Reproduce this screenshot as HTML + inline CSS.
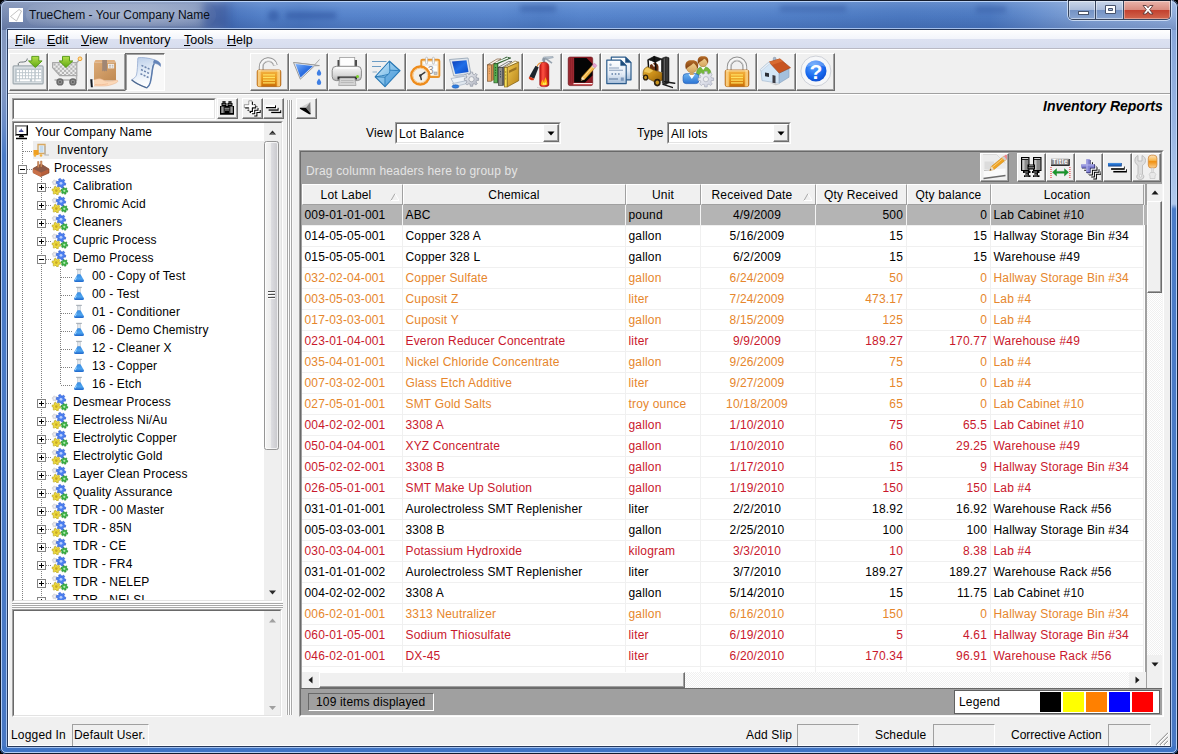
<!DOCTYPE html>
<html><head><meta charset="utf-8"><title>TrueChem</title>
<style>
*{box-sizing:border-box;margin:0;padding:0}
html,body{width:1178px;height:754px;overflow:hidden}
body{font-family:"Liberation Sans",sans-serif;font-size:12px;color:#000;background:#000;position:relative;line-height:1;letter-spacing:.17px}
.a{position:absolute}
.t{position:absolute;white-space:nowrap;line-height:14px;height:14px}
#frame{position:absolute;left:0;top:0;width:1178px;height:754px;border-radius:7px 7px 6px 6px;overflow:hidden;background:#4878c4}

#client{position:absolute;left:0;top:0;width:1178px;height:754px}
#cbg{position:absolute;left:8px;top:30px;width:1162px;height:716px;background:#f0f0f0}
#menubar{position:absolute;left:8px;top:30px;width:1162px;height:19px;background:linear-gradient(#fff 0,#f3f5fb 45%,#dce1f1 50%,#d6dcee 100%)}
.mi{position:absolute;top:33px;font-size:12.5px;letter-spacing:0;line-height:14px;white-space:nowrap}
.mi u{text-decoration:underline;text-underline-offset:1px}
.tb{position:absolute;top:53px;width:38px;height:38px;background:#f0f0f0;border-top:1px solid #fff;border-left:1px solid #fff;border-right:1px solid #6d6d6d;border-bottom:1px solid #6d6d6d}
.tb:after{content:"";position:absolute;left:0;top:0;right:0;bottom:0;border-right:1px solid #a0a0a0;border-bottom:1px solid #a0a0a0}
.tb.down{background:#f8f8f8;border-top:1px solid #6d6d6d;border-left:1px solid #6d6d6d;border-right:1px solid #fff;border-bottom:1px solid #fff}
.tb.down:after{border:none;border-top:1px solid #a0a0a0;border-left:1px solid #a0a0a0}
.tb svg{position:absolute;left:2px;top:2px}
.sb{position:absolute;background:#f0f0f0;border-top:1px solid #fff;border-left:1px solid #fff;border-right:1px solid #6d6d6d;border-bottom:1px solid #6d6d6d}
.sb:after{content:"";position:absolute;left:0;top:0;right:0;bottom:0;border-right:1px solid #a0a0a0;border-bottom:1px solid #a0a0a0}
.sunk{position:absolute;background:#fff;border-top:1px solid #a0a0a0;border-left:1px solid #a0a0a0;border-right:1px solid #fff;border-bottom:1px solid #fff}
.sunk:after{content:"";position:absolute;left:0;top:0;right:0;bottom:0;border-top:1px solid #696969;border-left:1px solid #696969;border-right:1px solid #e3e3e3;border-bottom:1px solid #e3e3e3}
.ti{position:absolute;white-space:nowrap;font-size:12px;line-height:18px;height:18px}
.dv{position:absolute;width:1px;background-image:linear-gradient(#808080 50%,transparent 50%);background-size:1px 2px}
.dh{position:absolute;height:1px;background-image:linear-gradient(90deg,#808080 50%,transparent 50%);background-size:2px 1px}
.ex{position:absolute;width:9px;height:9px;border:1px solid #848484;background:#fff}
.ex:before{content:"";position:absolute;left:1px;top:3px;width:5px;height:1px;background:#000}
.ex.p:after{content:"";position:absolute;left:3px;top:1px;width:1px;height:5px;background:#000}
.hc{position:absolute;top:184px;height:21px;background:#f0f0f0;border-left:1px solid #fff;border-top:1px solid #fff;border-right:1px solid #a0a0a0;border-bottom:1px solid #a0a0a0;text-align:center;font-size:12px;line-height:20px;white-space:nowrap}
.row{position:absolute;left:302px;width:842px;height:21px;background:#fff;border-bottom:1px solid #f0f0f0}
.row.sel{background:#b4b4b4}
.c{position:absolute;top:0;height:20px;line-height:21px;font-size:12px;white-space:nowrap;overflow:hidden;border-right:1px solid #f0f0f0}
.row.sel .c{border-right-color:#f4f4f4}
.o{color:#e6862c}.r{color:#c9182c}
.dith{background-color:#fff;background-image:linear-gradient(45deg,#f0f0f0 25%,transparent 25%,transparent 75%,#f0f0f0 75%),linear-gradient(45deg,#f0f0f0 25%,transparent 25%,transparent 75%,#f0f0f0 75%);background-size:2px 2px;background-position:0 0,1px 1px}

</style></head><body>
<div id="frame">
 <!-- title glass -->
 <div class="a" style="left:0;top:0;width:1178px;height:30px;background:linear-gradient(90deg,#7a8db4 0,#8094ba 60px,#8497bd 150px,#7c91ba 200px,#6d8dc6 218px,#4b76bf 232px,#5583cb 262px,#4f7dc6 300px,#5886ce 345px,#5988d0 500px,#5382ca 540px,#5988d0 580px,#5584cc 760px,#4d7bc3 900px,#4e7cc4 990px,#6a92d0 1040px,#86a6d8 1090px,#93b0de 1178px)"></div>
 <div class="a" style="left:0;top:0;width:1178px;height:30px;background:linear-gradient(rgba(255,255,255,.16) 0,rgba(255,255,255,.04) 30%,rgba(20,40,100,.04) 55%,rgba(10,30,90,.20) 100%)"></div>
 <div class="a" style="left:26px;top:4px;width:190px;height:22px;border-radius:11px;background:radial-gradient(ellipse at center,rgba(255,255,255,.30) 0,rgba(255,255,255,.16) 55%,rgba(255,255,255,0) 100%)"></div>
 <div class="a" style="left:203px;top:2px;width:26px;height:27px;background:rgba(40,70,140,.55);filter:blur(4px)"></div>
 <div class="a" style="left:268px;top:10px;width:11px;height:11px;border-radius:6px;background:rgba(40,75,150,.45);filter:blur(2px)"></div>
 <div class="a" style="left:286px;top:12px;width:50px;height:7px;background:rgba(40,75,150,.45);filter:blur(2.500px)"></div>
 <div class="a" style="left:520px;top:5px;width:36px;height:7px;background:rgba(40,75,150,.40);filter:blur(2.500px)"></div>
 <div class="a" style="left:780px;top:5px;width:66px;height:7px;background:rgba(40,75,150,.35);filter:blur(2.500px)"></div>
 <div class="a" style="left:976px;top:6px;width:30px;height:7px;background:rgba(40,75,150,.35);filter:blur(2.500px)"></div>
 <!-- left strip -->
 <div class="a" style="left:0;top:30px;width:8px;height:724px;background:linear-gradient(#8397be 0,#8298c2 60px,#6a8cc8 95px,#4b7cc8 125px,#4878c4 100%)"></div>
 <!-- right strip -->
 <div class="a" style="left:1170px;top:30px;width:8px;height:724px;background:linear-gradient(#88a6da 0,#98b4e2 90px,#b0c8ec 170px,#b0c8ec 174px,#4b7cc8 179px,#4878c4 100%)"></div>
 <!-- bottom strip -->
 <div class="a" style="left:0;top:746px;width:1178px;height:8px;background:#3f74c4"></div>
 <!-- outer lines -->
 <div class="a" style="left:0;top:0;width:1178px;height:754px;border:1px solid #141c2c;border-radius:7px 7px 6px 6px"></div>
 <div class="a" style="left:1px;top:1px;width:1176px;height:752px;border:1px solid rgba(200,222,255,.85);border-radius:6px 6px 5px 5px"></div>
</div>
<div class="a" style="left:6px;top:28px;width:1166px;height:720px;border:1px solid rgba(190,214,250,.8);border-radius:2px"></div>
<div class="a" style="left:7px;top:29px;width:1164px;height:718px;border:1px solid #26385a"></div>
<div id="cbg"></div>
<div class="a" style="left:8px;top:30px;width:1px;height:716px;background:#fff"></div>
<div class="a" style="left:8px;top:745px;width:1162px;height:1px;background:#fff"></div>
<div class="a" style="left:9px;top:8px;width:14px;height:14px;background:#fff"><svg width="14" height="14" viewBox="0 0 14 14"><path d="M1.500 8.500L10 1.500L12.500 3L7.500 13Z" fill="none" stroke="#b4b4b4" stroke-width="0.8"/></svg></div>
<div class="t" style="left:29px;top:8px;font-size:12px;letter-spacing:0;color:#0a0f18" id="title">TrueChem - Your Company Name</div>
<!-- caption buttons -->
<div class="a" style="left:1067px;top:0;width:105px;height:21px;border-radius:0 0 6px 6px;border:1px solid rgba(225,236,252,.75);border-top:none"></div>
<div class="a" style="left:1068px;top:1px;width:103px;height:19px;border:1px solid #37455e;border-top:none;border-radius:0 0 5px 5px;overflow:hidden">
 <div class="a" style="left:0;top:0;width:27px;height:18px;background:linear-gradient(#c9d6e9 0,#aabcda 48%,#7593c4 52%,#89a5d1 100%);border-right:1px solid #37455e;box-shadow:inset 0 0 0 1px rgba(255,255,255,.45)"></div>
 <div class="a" style="left:27px;top:0;width:28px;height:18px;background:linear-gradient(#c9d6e9 0,#aabcda 48%,#7593c4 52%,#89a5d1 100%);border-right:1px solid #37455e;box-shadow:inset 0 0 0 1px rgba(255,255,255,.45)"></div>
 <div class="a" style="left:55px;top:0;width:46px;height:18px;background:linear-gradient(#e9b4ab 0,#d98c80 48%,#c3412f 52%,#d2674f 100%);box-shadow:inset 0 0 0 1px rgba(255,255,255,.35)"></div>
 <svg class="a" style="left:0;top:0" width="101" height="18" viewBox="0 0 101 18">
  <rect x="9.500" y="10.500" width="10" height="3" fill="#fff" stroke="#48546c" stroke-width="1"/>
  <path d="M36.500 4.500h10v8h-10z M39.500 7.500h4v2h-4z" fill="#fff" fill-rule="evenodd" stroke="#48546c" stroke-width="1"/>
  <path d="M74 4.500h3.200l1.800 2.300 1.800-2.300H84l-3.300 4.200L84 13h-3.200L79 10.600 77.200 13H74l3.300-4.300z" fill="#fff" stroke="#5a3838" stroke-width="0.9"/>
 </svg>
</div>
<div id="client">
<div id="menubar"></div>
<div class="a" style="left:8px;top:48px;width:1162px;height:1px;background:#b9b9c4"></div>
<div class="a" style="left:8px;top:49px;width:1162px;height:1px;background:#fff"></div>
<div class="mi" style="left:15px"><u>F</u>ile</div>
<div class="mi" style="left:47px"><u>E</u>dit</div>
<div class="mi" style="left:81px"><u>V</u>iew</div>
<div class="mi" style="left:119px">Inventory</div>
<div class="mi" style="left:184px"><u>T</u>ools</div>
<div class="mi" style="left:227px"><u>H</u>elp</div>
<svg width="0" height="0" style="position:absolute"><defs>
<linearGradient id="gGreen" x1="0" y1="0" x2="0" y2="1"><stop offset="0" stop-color="#b4e04a"/><stop offset="1" stop-color="#5fa812"/></linearGradient>
<linearGradient id="gLock" x1="0" y1="0" x2="0" y2="1"><stop offset="0" stop-color="#f4b448"/><stop offset=".5" stop-color="#e89818"/><stop offset="1" stop-color="#c86c08"/></linearGradient>
<linearGradient id="gLockH" x1="0" y1="0" x2="1" y2="0"><stop offset="0" stop-color="#c9791a"/><stop offset=".06" stop-color="#fbd48a"/><stop offset=".16" stop-color="#f8c060" stop-opacity=".9"/><stop offset=".2" stop-color="#e89820" stop-opacity="0"/><stop offset=".8" stop-color="#e89820" stop-opacity="0"/><stop offset=".84" stop-color="#f8c060" stop-opacity=".9"/><stop offset=".94" stop-color="#fbd48a"/><stop offset="1" stop-color="#b7650e"/></linearGradient>
<linearGradient id="gSteel" x1="0" y1="0" x2="1" y2="0"><stop offset="0" stop-color="#9a9a9a"/><stop offset=".5" stop-color="#f4f4f4"/><stop offset="1" stop-color="#a8a8a8"/></linearGradient>
<linearGradient id="gBlue" x1="0" y1="0" x2="1" y2="1"><stop offset="0" stop-color="#7db0f8"/><stop offset=".5" stop-color="#2f72e4"/><stop offset="1" stop-color="#1c50c0"/></linearGradient>
<linearGradient id="gPrn" x1="0" y1="0" x2="0" y2="1"><stop offset="0" stop-color="#fbfbfb"/><stop offset=".6" stop-color="#d9d9d9"/><stop offset="1" stop-color="#b4b4b4"/></linearGradient>
<linearGradient id="gEnv" x1="0" y1="0" x2="1" y2="1"><stop offset="0" stop-color="#d9eefb"/><stop offset="1" stop-color="#7cbde8"/></linearGradient>
<linearGradient id="gScreen" x1="0" y1="0" x2="1" y2="1"><stop offset="0" stop-color="#0b3fb8"/><stop offset=".5" stop-color="#1f6fe8"/><stop offset="1" stop-color="#0c48c4"/></linearGradient>
<linearGradient id="gDoc" x1="0" y1="0" x2="0" y2="1"><stop offset="0" stop-color="#ffffff"/><stop offset=".6" stop-color="#e4ecf6"/><stop offset="1" stop-color="#a4bcd8"/></linearGradient>
<linearGradient id="gRed" x1="0" y1="0" x2="1" y2="0"><stop offset="0" stop-color="#c01010"/><stop offset=".35" stop-color="#ff5040"/><stop offset="1" stop-color="#b00c0c"/></linearGradient>
<radialGradient id="gHelp" cx=".4" cy=".3" r=".8"><stop offset="0" stop-color="#5aa2ff"/><stop offset=".6" stop-color="#1768ee"/><stop offset="1" stop-color="#0a46c8"/></radialGradient>
<linearGradient id="gBox" x1="0" y1="0" x2="1" y2="1"><stop offset="0" stop-color="#dcaa76"/><stop offset="1" stop-color="#c08a52"/></linearGradient>
<linearGradient id="gPaper" x1="0" y1="0" x2="1" y2="0"><stop offset="0" stop-color="#f4f8fd"/><stop offset=".7" stop-color="#dfe9f6"/><stop offset="1" stop-color="#9ab4d8"/></linearGradient>
<linearGradient id="gGear" x1="0" y1="0" x2="1" y2="1"><stop offset="0" stop-color="#f4f5f8"/><stop offset="1" stop-color="#a9aebb"/></linearGradient>
<linearGradient id="gYel" x1="0" y1="0" x2="1" y2="1"><stop offset="0" stop-color="#f0c850"/><stop offset="1" stop-color="#b88418"/></linearGradient>
</defs></svg>
<div class="a" style="left:8px;top:93px;width:1162px;height:1px;background:#a0a0a0"></div><div class="a" style="left:8px;top:94px;width:1162px;height:1px;background:#fff"></div>
<div class="tb" style="left:9px;width:39px"><svg style="left:-1px;top:-1px" width="39" height="38" viewBox="0 0 39 38"><path d="M9.300 13v-2.500c.8-1.800 3-1.300 5-1.500c2.500-.3 3.800-1 4-3.500" fill="none" stroke="#6c7478" stroke-width="1"/><rect x="4.100" y="12.900" width="30" height="18" rx="1" fill="#d8dee2" stroke="#a0aab0" stroke-width="1.200"/><rect x="6" y="15.500" width="26.500" height="13.500" fill="#bcc6cc"/><rect x="7.8" y="17.1" width="2.200" height="2.100" fill="#fff"/><rect x="10.9" y="17.1" width="2.200" height="2.100" fill="#fff"/><rect x="13.9" y="17.1" width="2.200" height="2.100" fill="#fff"/><rect x="17.0" y="17.1" width="2.200" height="2.100" fill="#fff"/><rect x="20.0" y="17.1" width="2.200" height="2.100" fill="#fff"/><rect x="23.1" y="17.1" width="2.200" height="2.100" fill="#fff"/><rect x="26.8" y="17.1" width="2.200" height="2.100" fill="#fff"/><rect x="29.9" y="17.1" width="2.200" height="2.100" fill="#fff"/><rect x="7.8" y="20.2" width="2.200" height="2.100" fill="#fff"/><rect x="10.9" y="20.2" width="2.200" height="2.100" fill="#fff"/><rect x="13.9" y="20.2" width="2.200" height="2.100" fill="#fff"/><rect x="17.0" y="20.2" width="2.200" height="2.100" fill="#fff"/><rect x="20.0" y="20.2" width="2.200" height="2.100" fill="#fff"/><rect x="23.1" y="20.2" width="2.200" height="2.100" fill="#fff"/><rect x="26.8" y="20.2" width="2.200" height="2.100" fill="#fff"/><rect x="29.9" y="20.2" width="2.200" height="2.100" fill="#fff"/><rect x="7.8" y="23.2" width="2.200" height="2.100" fill="#fff"/><rect x="10.9" y="23.2" width="2.200" height="2.100" fill="#fff"/><rect x="13.9" y="23.2" width="2.200" height="2.100" fill="#fff"/><rect x="17.0" y="23.2" width="2.200" height="2.100" fill="#fff"/><rect x="20.0" y="23.2" width="2.200" height="2.100" fill="#fff"/><rect x="23.1" y="23.2" width="2.200" height="2.100" fill="#fff"/><rect x="26.8" y="23.2" width="2.200" height="2.100" fill="#fff"/><rect x="29.9" y="23.2" width="2.200" height="2.100" fill="#fff"/><rect x="7.800" y="26.300" width="2.200" height="2" fill="#fff"/><rect x="10.900" y="26.300" width="10" height="2" fill="#fff"/><rect x="23.100" y="26.300" width="2.200" height="2" fill="#fff"/><rect x="26.400" y="26.300" width="5.600" height="2" fill="#fff"/><path d="M22.8 3.4h7v4.500h3.300l-6.800 6.600l-6.800-6.600h3.300z" fill="url(#gGreen)" stroke="#4f9410" stroke-width=".9" stroke-linejoin="round"/></svg></div>
<div class="tb" style="left:48px;width:39px"><svg style="left:-1px;top:-1px" width="39" height="38" viewBox="0 0 39 38"><path d="M29 9.500L31.500 6.500" stroke="#a8a8a8" stroke-width="1.200" fill="none"/><circle cx="32" cy="5.800" r="1.900" fill="#fce0a0" stroke="#f0a030" stroke-width="1"/><clipPath id="cpCart"><path d="M4.600 9.700h24.200v13h-17l-7.200-8z"/></clipPath><path d="M4.600 9.700h24.200v13h-17l-7.200-8z" fill="#ececec"/><g clip-path="url(#cpCart)"><rect x="5.5" y="10.5" width="2.100" height="2.100" fill="#b4b4b4"/><rect x="9.7" y="10.5" width="2.100" height="2.100" fill="#b4b4b4"/><rect x="13.9" y="10.5" width="2.100" height="2.100" fill="#b4b4b4"/><rect x="18.1" y="10.5" width="2.100" height="2.100" fill="#b4b4b4"/><rect x="22.3" y="10.5" width="2.100" height="2.100" fill="#b4b4b4"/><rect x="26.5" y="10.5" width="2.100" height="2.100" fill="#b4b4b4"/><rect x="7.6" y="12.6" width="2.100" height="2.100" fill="#b4b4b4"/><rect x="11.8" y="12.6" width="2.100" height="2.100" fill="#b4b4b4"/><rect x="16.0" y="12.6" width="2.100" height="2.100" fill="#b4b4b4"/><rect x="20.2" y="12.6" width="2.100" height="2.100" fill="#b4b4b4"/><rect x="24.4" y="12.6" width="2.100" height="2.100" fill="#b4b4b4"/><rect x="5.5" y="14.7" width="2.100" height="2.100" fill="#b4b4b4"/><rect x="9.7" y="14.7" width="2.100" height="2.100" fill="#b4b4b4"/><rect x="13.9" y="14.7" width="2.100" height="2.100" fill="#b4b4b4"/><rect x="18.1" y="14.7" width="2.100" height="2.100" fill="#b4b4b4"/><rect x="22.3" y="14.7" width="2.100" height="2.100" fill="#b4b4b4"/><rect x="26.5" y="14.7" width="2.100" height="2.100" fill="#b4b4b4"/><rect x="7.6" y="16.8" width="2.100" height="2.100" fill="#b4b4b4"/><rect x="11.8" y="16.8" width="2.100" height="2.100" fill="#b4b4b4"/><rect x="16.0" y="16.8" width="2.100" height="2.100" fill="#b4b4b4"/><rect x="20.2" y="16.8" width="2.100" height="2.100" fill="#b4b4b4"/><rect x="24.4" y="16.8" width="2.100" height="2.100" fill="#b4b4b4"/><rect x="5.5" y="18.9" width="2.100" height="2.100" fill="#b4b4b4"/><rect x="9.7" y="18.9" width="2.100" height="2.100" fill="#b4b4b4"/><rect x="13.9" y="18.9" width="2.100" height="2.100" fill="#b4b4b4"/><rect x="18.1" y="18.9" width="2.100" height="2.100" fill="#b4b4b4"/><rect x="22.3" y="18.9" width="2.100" height="2.100" fill="#b4b4b4"/><rect x="26.5" y="18.9" width="2.100" height="2.100" fill="#b4b4b4"/><rect x="7.6" y="21.0" width="2.100" height="2.100" fill="#b4b4b4"/><rect x="11.8" y="21.0" width="2.100" height="2.100" fill="#b4b4b4"/><rect x="16.0" y="21.0" width="2.100" height="2.100" fill="#b4b4b4"/><rect x="20.2" y="21.0" width="2.100" height="2.100" fill="#b4b4b4"/><rect x="24.4" y="21.0" width="2.100" height="2.100" fill="#b4b4b4"/></g><path d="M4.600 9.700h24.200v13h-17l-7.200-8z" fill="none" stroke="#a8a8a8" stroke-width="1.200" stroke-linejoin="round"/><path d="M28.500 22.500v4.500h-22" fill="none" stroke="#b0b0b0" stroke-width="1.500"/><circle cx="12" cy="28.900" r="3.700" fill="#6a6a6a"/><circle cx="12" cy="28.900" r="2.200" fill="#909090"/><circle cx="12" cy="28.900" r="1" fill="#5a5a5a"/><circle cx="24.900" cy="28.900" r="3.700" fill="#6a6a6a"/><circle cx="24.900" cy="28.900" r="2.200" fill="#909090"/><circle cx="24.900" cy="28.900" r="1" fill="#5a5a5a"/><path d="M14.5 3.4h7v4.500h3.300l-6.800 6.600l-6.800-6.600h3.300z" fill="url(#gGreen)" stroke="#4f9410" stroke-width=".9" stroke-linejoin="round"/></svg></div>
<div class="tb" style="left:87px;width:39px"><svg style="left:-1px;top:-1px" width="39" height="38" viewBox="0 0 39 38"><path d="M7 9.500l1.500-2.500h19l1.500 2.500z" fill="#e0b080"/><rect x="7" y="9.500" width="22" height="18" fill="url(#gBox)"/><path d="M15.200 7h4.800v11.400l-1.200-.9l-1.200.9l-1.200-.9l-1.200.9z" fill="#a08674"/><rect x="21" y="10.900" width="6.100" height="4.500" fill="#f4f0ec"/><path d="M21.800 12.300h2.200M24.800 12.300h1.600M21.800 14h2.200M24.800 14h1.600" stroke="#a8a098" stroke-width=".8"/><path d="M6 27.500c2-1.200 4.500-2 7-1.700c2 .2 3 1.200 4.500 1.900c3 1.200 7 .8 10.500-.2c1.500-.5 3-.3 2.800.8c-.2 1-1.500 1.500-3 2.200c-3 1.300-7 2.400-11 2.500h-10.800z" fill="#fbd8b8" stroke="#e8b088" stroke-width=".5"/><path d="M8 31.500c4 .5 9 .3 13-.8" stroke="#f0b890" stroke-width=".7" fill="none"/><path d="M3.200 26.200h2.400l.3 8h-2z" fill="#181c24"/><path d="M5.600 26.500l1.400.5v6.500h-1.100z" fill="#fff"/></svg></div>
<div class="tb down" style="left:125px;width:40px"><svg style="left:0px;top:-1px" width="39" height="38" viewBox="0 0 39 38"><g transform="translate(0,-1.800) scale(1,1.050)"><path d="M12 6.300C16 5.500 23 6.500 28.300 8.100C31.500 9 34 10.500 34.500 12.200L34.500 14.500C32.500 12.500 30 11.500 28.300 11.600C26.500 14 26.500 17 26 20.300C25.500 24 25 27 24.300 29.700C23.500 32.500 22.500 34 20.800 34.900C15 33 9 30.500 5.600 27.300C8 26 9.800 24.500 10.500 22.700C11.500 18 11.500 13 11.700 8.700C11.700 7.500 11.800 6.800 12 6.300Z" fill="url(#gRc)" stroke="#8ca4cc" stroke-width=".7" stroke-linejoin="round"/><path d="M28.300 8.100C31.500 9 34 10.500 34.500 12.200L34.500 14.500C32.500 12.500 30 11.500 28.300 11.600C26.800 11.400 26.800 9.800 28.300 8.100Z" fill="#6484b8"/><path d="M28.300 11.600C26.500 14 26.500 17 26 20.300C25.500 24 25 27 24.300 29.700C23.500 32.500 22.500 34 20.800 34.900" fill="none" stroke="#5c7cac" stroke-width="1.500"/><path d="M20.800 34.900C15 33 9 30.500 5.600 27.300" fill="none" stroke="#4c6890" stroke-width="1.300"/><path d="M15.500 13.500l8.500 3.800M15 17.500l8.500 3.800M14.500 21.500l8.500 3.800" stroke="#6c84ac" stroke-width="1.500" stroke-dasharray="2 1.400"/></g><defs><linearGradient id="gRc" x1="0" y1="0" x2=".2" y2="1"><stop offset="0" stop-color="#b8cce8"/><stop offset=".45" stop-color="#dfe9f6"/><stop offset="1" stop-color="#ffffff"/></linearGradient></defs></svg></div>
<div class="tb" style="left:250px;width:39px"><svg style="left:-1px;top:-1px" width="39" height="38" viewBox="0 0 39 38"><path d="M11.200 17.500V13.700A7.200 7.200 0 0 1 25.400 12.200" fill="none" stroke="#909090" stroke-width="4.800" stroke-linecap="butt"/><path d="M11.200 17.500V13.700A7.200 7.200 0 0 1 25.400 12.200" fill="none" stroke="#f6f6f6" stroke-width="3"/><path d="M12.500 17.500V13.700A5.900 5.900 0 0 1 24.100 12.500" fill="none" stroke="#c4c4c4" stroke-width="1"/><rect x="7.200" y="17" width="23.600" height="16.600" rx="1.800" fill="url(#gLock)" stroke="#a85c0c" stroke-width=".8"/><rect x="7.200" y="17" width="23.600" height="16.600" rx="1.800" fill="url(#gLockH)"/><path d="M13 21.800h12M13 24.500h12M13 27.200h12M13 29.900h12" stroke="#ffe060" stroke-width="1.300"/><path d="M8.500 17.900h21" stroke="#fde6b0" stroke-width="1"/></svg></div>
<div class="tb" style="left:289px;width:39px"><svg style="left:-1px;top:-1px" width="39" height="38" viewBox="0 0 39 38"><path d="M4.500 9.500l21 2.500l5-5.500" fill="none" stroke="#a8a8a8" stroke-width="1"/><path d="M4.500 9.500l21.100 2.500l4.800.6l-4.800 .2l-14.300 13.400z" fill="#e4ecf8" stroke="#9a9a9a" stroke-width="1" stroke-linejoin="round"/><path d="M6.500 11l17.500 2l-12.500 11.500z" fill="url(#gBlue)"/><path d="M30 16.300c1.500 2 2.200 3 2.200 4.200a2.200 2.200 0 0 1-4.400 0c0-1.200.7-2.200 2.200-4.200z" fill="#3f7fe4"/><path d="M30 25.500c1.500 2 2.200 3 2.200 4.200a2.200 2.200 0 0 1-4.400 0c0-1.200.7-2.200 2.200-4.200z" fill="#3f7fe4"/></svg></div>
<div class="tb" style="left:328px;width:39px"><svg style="left:-1px;top:-1px" width="39" height="38" viewBox="0 0 39 38"><rect x="9.500" y="7" width="19.500" height="9" fill="#4a4a4a"/><rect x="11.700" y="4.500" width="15" height="11" fill="#fdfdfd" stroke="#9c9c9c" stroke-width=".8"/><rect x="4.200" y="13.300" width="29.200" height="14.300" rx="4" fill="url(#gPrn)" stroke="#8a8a8a" stroke-width="1"/><path d="M8 15h21" stroke="#fff" stroke-width="1.200"/><rect x="9.500" y="23.500" width="19.500" height="3" fill="#2e2e2e"/><path d="M11.800 25h15l1.200 7.500h-17.400z" fill="#d4d4d4" stroke="#9a9a9a" stroke-width=".7"/><path d="M13 27.500h12.500M12.700 29.500h13" stroke="#b4b4b4" stroke-width=".8"/><circle cx="29.500" cy="23.500" r="1.500" fill="#7ad02c"/></svg></div>
<div class="tb" style="left:367px;width:39px"><svg style="left:-1px;top:-1px" width="39" height="38" viewBox="0 0 39 38"><path d="M5 8.500h14.500M5 13.500h9" stroke="#6c9cc4" stroke-width="1.100"/><path d="M5.500 19h4.500" stroke="#b4c8d8" stroke-width="1.600"/><path d="M8.200 23.800L22.500 8.200L33 17.700L18 33.600z" fill="url(#gEnv2)" stroke="#2878b4" stroke-width="1.200" stroke-linejoin="round"/><path d="M8.200 23.800L22.500 8.200L22.800 17.200C22.800 19.500 22.300 20.800 21.100 21.400C17 22.500 12 23.300 8.200 23.800z" fill="url(#gEnv)" stroke="#2878b4" stroke-width=".9" stroke-linejoin="round"/><path d="M22.800 17.200L33 17.700M18 24.200V33.600M21.100 21.400L18 24.200L8.200 23.800" fill="none" stroke="#2878b4" stroke-width=".9"/><path d="M22.800 17.200L33 17.700L18 33.600V24.200L21.100 21.400C22.300 20.800 22.800 19.500 22.800 17.200z" fill="#3c90d4" opacity=".35"/><defs><linearGradient id="gEnv2" x1="0" y1="0" x2="1" y2="1"><stop offset="0" stop-color="#b8dcf4"/><stop offset="1" stop-color="#58a8e0"/></linearGradient></defs></svg></div>
<div class="tb" style="left:406px;width:39px"><svg style="left:-1px;top:-1px" width="39" height="38" viewBox="0 0 39 38"><rect x="15.300" y="6.800" width="18" height="17.200" rx="1.200" fill="#fdfdfd" stroke="#e8942c" stroke-width="2"/><rect x="16.800" y="8.300" width="15" height="14.200" fill="none" stroke="#f8d8a0" stroke-width=".7"/><path d="M17 12h15" stroke="#e0e0e0" stroke-width="1"/><text x="22" y="21" font-family="Liberation Sans" font-size="10" fill="#8c8c8c">3</text><rect x="28" y="19" width="3" height="2.500" fill="#c8c8c8" stroke="#909090" stroke-width=".5"/><rect x="19.600" y="4.200" width="2" height="6.800" rx="1" fill="#fafafa" stroke="#a8a8a8" stroke-width=".6"/><rect x="26.400" y="4.200" width="2" height="6.800" rx="1" fill="#fafafa" stroke="#a8a8a8" stroke-width=".6"/><circle cx="14.300" cy="22.500" r="9" fill="#f2f0ea" stroke="#ee8c1c" stroke-width="2.400"/><circle cx="14.300" cy="22.500" r="7.300" fill="none" stroke="#f8c078" stroke-width=".8"/><path d="M14.300 22.500l4.500-3.200M14.300 22.500l1 4" stroke="#3a3a3a" stroke-width="1.500" stroke-linecap="round"/><circle cx="14.300" cy="22.500" r="1.300" fill="#3a3a3a"/></svg></div>
<div class="tb" style="left:445px;width:39px"><svg style="left:-1px;top:-1px" width="39" height="38" viewBox="0 0 39 38"><path d="M4.500 6.500l18.500-1.500l2.800 15.500l-17 2.500z" fill="#dfe6ee" stroke="#9aa8b8" stroke-width=".9" stroke-linejoin="round"/><path d="M7 8.500l14.500-1.200l2 11.700l-13.200 2z" fill="url(#gScreen)"/><path d="M10 22.500l9-1.300l1 3.500l-9 1.300z" fill="#c4ccd8"/><path d="M6 25.500l15-2.500l4 4.500l-16 3.500z" fill="#eef2f6" stroke="#a8b4c4" stroke-width=".8"/><path d="M7.500 30.500l14.500-3l2 2.500l-14 3.500z" fill="#dfe6ee" stroke="#a8b4c4" stroke-width=".7"/><ellipse cx="10.500" cy="33.500" rx="3.400" ry="1.700" fill="#2f7fe0" stroke="#1c58b0" stroke-width=".6"/><polygon points="33.6,25.0 33.6,27.4 31.7,27.4 31.0,29.1 32.4,30.4 30.7,32.1 29.4,30.7 27.7,31.4 27.7,33.3 25.3,33.3 25.3,31.4 23.6,30.7 22.3,32.1 20.6,30.4 22.0,29.1 21.3,27.4 19.4,27.4 19.4,25.0 21.3,25.0 22.0,23.3 20.6,22.0 22.3,20.3 23.6,21.7 25.3,21.0 25.3,19.1 27.7,19.1 27.7,21.0 29.4,21.7 30.7,20.3 32.4,22.0 31.0,23.3 31.7,25.0" fill="url(#gGear)" stroke="#9096a4" stroke-width=".7" stroke-linejoin="round"/><circle cx="26.5" cy="26.2" r="2.6" fill="#f0f0f0" stroke="#9096a4" stroke-width=".7"/></svg></div>
<div class="tb" style="left:484px;width:39px"><svg style="left:-1px;top:-1px" width="39" height="38" viewBox="0 0 39 38"><path d="M3.400 11.900h4.100l9.500-5.900h-4z" fill="#fbf4ec" stroke="#6c4420" stroke-width=".6" stroke-linejoin="round"/><path d="M7.500 11.900l2.400-1.400v16.500l-2.400 1.200z" fill="#c88448"/><rect x="3.400" y="11.900" width="4.100" height="16.300" fill="#eca868" stroke="#6c4420" stroke-width=".6"/><path d="M5.400 15v6" stroke="#c07c40" stroke-width=".8" stroke-dasharray="1.500 1"/><path d="M9.900 10.900h3.400l13.500-5.900l-4.300-.9z" fill="#2c6c30" stroke="#143c14" stroke-width=".6" stroke-linejoin="round"/><path d="M11.500 10l12.500-5.200" stroke="#f4f8f4" stroke-width="1.300"/><path d="M13.300 10.900l1-.5v20l-1-.5z" fill="#2c6c30"/><rect x="9.900" y="10.900" width="3.400" height="19" fill="#5cb054" stroke="#1c4c1c" stroke-width=".6"/><path d="M11.600 14v9" stroke="#1c5c1c" stroke-width="1" stroke-dasharray="1.300 1.300"/><path d="M14.300 14.300h4.400l9.300-5.800h-3.500z" fill="#ececec" stroke="#3c3c3c" stroke-width=".6" stroke-linejoin="round"/><path d="M18.700 14.300l1.700-.9v19.600l-1.700-.7z" fill="#5c5c5c"/><rect x="14.300" y="14.300" width="4.400" height="18" fill="#8c8c8c" stroke="#333" stroke-width=".6"/><path d="M16.500 18v7" stroke="#3c4c5c" stroke-width="1" stroke-dasharray="1.300 1.300"/><path d="M20.400 14.300h2.700l11.600-5.100l-3.700-1.200z" fill="#fff8d8" stroke="#7c5c10" stroke-width=".6" stroke-linejoin="round"/><path d="M23.100 14.300l11.600-5.100v18.500l-11.600 6.300z" fill="url(#gYel)" stroke="#7c5c10" stroke-width=".7" stroke-linejoin="round"/><rect x="20.400" y="14.300" width="2.700" height="19.700" fill="#f4e058" stroke="#7c5c10" stroke-width=".6"/><path d="M21.700 18v9" stroke="#b09018" stroke-width=".8" stroke-dasharray="2 1.300"/><path d="M25 17.500l7.500-3.500v2.500l-7.500 3.500z" fill="#9c7420"/></svg></div>
<div class="tb" style="left:523px;width:39px"><svg style="left:-1px;top:-1px" width="39" height="38" viewBox="0 0 39 38"><path d="M19 7.500l1.500-3.500l9.500-.5l.3 1.200l-7.300 1.500z" fill="#b8c4d0" stroke="#8894a0" stroke-width=".5"/><path d="M22 5l7 5.200" stroke="#98a4b0" stroke-width="1.600"/><rect x="19.800" y="5" width="2.400" height="5" fill="#8c98a4"/><path d="M20 9.500c-3-.3-5 1.500-6 4" fill="none" stroke="#e89030" stroke-width="1.100"/><path d="M12.500 12.800l3.200 1.500l-4.500 11.500l-4.800-2.300z" fill="#1c242c"/><path d="M6.400 23.500l4.800 2.300l-.7 1.500c-2 .3-4.200-.8-4.800-2.300z" fill="#d83818"/><path d="M16.700 13.700c0-3 2-4.500 4.600-4.500s4.600 1.500 4.600 4.500v18c0 1.500-2 2.100-4.600 2.100s-4.600-.6-4.600-2.100z" fill="url(#gRed)" stroke="#980808" stroke-width=".5"/><path d="M17.700 31.600c.3-2.500 1.200-3 1.800-5c.8 1.200 .8 2.200 1.500 2.700c.2-2 1-3.500 1.800-5.200c.3 2.500 1.500 3.500 1.700 7.500c-2 .8-4.800.8-6.800 0z" fill="#ffb010"/><path d="M19.500 31.800c.3-1.200.8-1.600 1.200-2.500c.5 1 .8 1.200 1.300 1.300c.2-.8.500-1.200.8-1.800c.2 1.200.5 1.800.5 3z" fill="#fff060"/><path d="M14 34.300c2 .8 5 1 8 .8" stroke="#c8c8c8" stroke-width=".9" fill="none"/></svg></div>
<div class="tb" style="left:562px;width:39px"><svg style="left:-1px;top:-1px" width="39" height="38" viewBox="0 0 39 38"><rect x="6.200" y="4" width="24.500" height="28.600" rx="1.800" fill="#8c1c24" stroke="#6c1018" stroke-width=".6"/><rect x="7" y="4.500" width="4.800" height="27.500" fill="#a02c34"/><path d="M8.300 5v25M10.300 5v25" stroke="#7c1820" stroke-width=".6"/><path d="M12.200 5h12.300l6 6v11.500l-7.500 7h-10.800z" fill="#050505"/><path d="M11.500 30h19v1.500h-19z" fill="#fbeeee"/><path d="M11.500 31.700h19" stroke="#d84040" stroke-width=".8"/><path d="M19 27.600l1-3.800l10.400-11.600l2.800 2.500l-10.400 11.600z" fill="#f4b848" stroke="#b87c18" stroke-width=".5"/><path d="M21 24.500l10-11.200" stroke="#fbe0a0" stroke-width=".9"/><path d="M29.400 13.300l1-1.100l2.800 2.500l-1 1.100z" fill="#d8d0d0"/><path d="M30.400 12.200l1.400-1.600c.8-.8 3.600 1.700 2.800 2.500l-1.400 1.600z" fill="#e8a0d0" stroke="#b870a0" stroke-width=".4"/><path d="M19 27.600l1-3.800l2.800 2.500z" fill="#f8e4c0"/><path d="M19 27.600l.4-1.500l1.100 1z" fill="#333"/></svg></div>
<div class="tb" style="left:601px;width:39px"><svg style="left:-1px;top:-1px" width="39" height="38" viewBox="0 0 39 38"><path d="M10.3 4.1h14.2l5.500 5.500v17.2h-19.7z" fill="url(#gDoc)" stroke="#2c5c8c" stroke-width="1.200" stroke-linejoin="round"/><path d="M24.5 4.1v5.500h5.500z" fill="#1c4c7c" stroke="#2c5c8c" stroke-width=".6" stroke-linejoin="round"/><path d="M5.8 7.1h13.9l5.500 5.500v18.0h-19.4z" fill="url(#gDoc)" stroke="#2c5c8c" stroke-width="1.200" stroke-linejoin="round"/><path d="M19.7 7.1v5.500h5.500z" fill="#1c4c7c" stroke="#2c5c8c" stroke-width=".6" stroke-linejoin="round"/><circle cx="9.500" cy="11.800" r="1.200" fill="#9cb0c8"/><path d="M8 15h10M8 17.300h14" stroke="#8ca0bc" stroke-width="1.100"/><path d="M10.500 21h10" stroke="#5c7ca4" stroke-width="1.300" stroke-dasharray="1.500 1.800"/><path d="M8 26h9" stroke="#7c94b4" stroke-width="1.500"/><rect x="19.800" y="24.500" width="3" height="3.300" fill="#7c98bc"/></svg></div>
<div class="tb" style="left:640px;width:39px"><svg style="left:-1px;top:-1px" width="39" height="38" viewBox="0 0 39 38"><path d="M8.500 17l-.5-10.500l6-3.500l8 2.500v13" fill="#fff" fill-opacity=".5"/><path d="M10 12l4.500-2.500l4 2v6.500l-8.500-1z" fill="#6c3010"/><path d="M8 6.500l6.200-3.200l7.800 2.700l-6.500 3.200z" fill="#181818" stroke="#000" stroke-width=".6" stroke-linejoin="round"/><path d="M8 6.500l.8 11M15.500 9.200l.5 11M22 6v13M14.200 3.300l.3 6" stroke="#0c0c0c" stroke-width="1.500" fill="none"/><path d="M11 8.500l3.500 5M17 9l3.500 6" stroke="#fff" stroke-width="1.400" opacity=".85"/><path d="M3.100 20c0-3 1.500-5.500 4.500-6.300l6 3.300l9.200 3v7l-7 2.500l-12.700-6.500z" fill="url(#gFork)" stroke="#6c4808" stroke-width=".6" stroke-linejoin="round"/><path d="M4 18.500c.8-2 2-3.300 3.800-3.800l5.500 3l-4 2.500z" fill="#f4d068" opacity=".8"/><path d="M22.300 5l3.700-1.200l3 1v25l-3.500 2l-3.200-1.500z" fill="#2c2c2c" stroke="#0c0c0c" stroke-width=".5"/><path d="M24.300 5.500v24.500" stroke="#6c6c6c" stroke-width="1"/><path d="M27 5v25" stroke="#4c4c4c" stroke-width=".8"/><path d="M24.500 28.700l10.200 1.500M23 31.400l9.300 3" stroke="#181818" stroke-width="1.500" stroke-linecap="round"/><ellipse cx="5.600" cy="24.500" rx="2.700" ry="3.100" fill="#2c2010"/><ellipse cx="5.600" cy="24.500" rx="1.400" ry="1.700" fill="#c89420"/><ellipse cx="17.300" cy="29.600" rx="3.400" ry="3.800" fill="#2c2010"/><ellipse cx="17.300" cy="29.600" rx="1.800" ry="2.100" fill="#c89420"/><defs><linearGradient id="gFork" x1="0" y1="0" x2="1" y2="1"><stop offset="0" stop-color="#e8b838"/><stop offset=".5" stop-color="#c88c18"/><stop offset="1" stop-color="#8c5c08"/></linearGradient></defs></svg></div>
<div class="tb" style="left:679px;width:39px"><svg style="left:-1px;top:-1px" width="39" height="38" viewBox="0 0 39 38"><path d="M17.400 21c0-4.500 2.500-7.300 7-7.300s7.600 2.800 7.600 7.300v1h-14.600z" fill="#74b83c" stroke="#4c8c1c" stroke-width=".5"/><path d="M22 14l2.200 3l2.200-3z" fill="#fff"/><circle cx="24.0" cy="9.2" r="4.5" fill="url(#gFace)" stroke="#a87c3c" stroke-width=".4"/><path d="M19.1 10.7c-1.7 -6.4 2.0 -7.6 4.9 -7.4c2.9 -0.2 6.6 1.0 4.9 7.4c-1.2 -3.4 -2.5 -4.4 -3.7 -4.9c-2.0 2.5 -4.4 2.7 -6.1 4.9z" fill="url(#gHair)"/><rect x="4.100" y="20.700" width="15.700" height="9.900" rx="3" fill="url(#gShirt)" stroke="#1c5cb8" stroke-width=".7"/><path d="M9.500 21.200l3.300 4.800l3.300-4.800z" fill="#fff"/><rect x="11" y="19.500" width="3.600" height="2.500" fill="#d8a860"/><circle cx="12.8" cy="14.4" r="5.4" fill="url(#gFace)" stroke="#a87c3c" stroke-width=".4"/><path d="M6.9 16.2c-2.1 -7.7 2.4 -9.1 5.9 -8.9c3.5 -0.3 8.0 1.2 5.9 8.9c-1.5 -4.1 -3.0 -5.3 -4.4 -5.9c-2.4 3.0 -5.3 3.2 -7.4 5.9z" fill="url(#gHair)"/><polygon points="34.6,24.9 34.6,27.5 32.5,27.5 31.8,29.3 33.3,30.7 31.4,32.6 30.0,31.1 28.2,31.8 28.2,33.9 25.6,33.9 25.6,31.8 23.8,31.1 22.4,32.6 20.5,30.7 22.0,29.3 21.3,27.5 19.2,27.5 19.2,24.9 21.3,24.9 22.0,23.1 20.5,21.7 22.4,19.8 23.8,21.3 25.6,20.6 25.6,18.5 28.2,18.5 28.2,20.6 30.0,21.3 31.4,19.8 33.3,21.7 31.8,23.1 32.5,24.9" fill="url(#gGear2)" stroke="#a8acbc" stroke-width=".7" stroke-linejoin="round"/><circle cx="26.9" cy="26.2" r="2.6" fill="#f0f0f0" stroke="#a8acbc" stroke-width=".7"/><defs><linearGradient id="gFace" x1="0" y1="0" x2="0" y2="1"><stop offset="0" stop-color="#f0d090"/><stop offset="1" stop-color="#d4a45c"/></linearGradient><linearGradient id="gHair" x1="0" y1="0" x2="0" y2="1"><stop offset="0" stop-color="#b46c28"/><stop offset="1" stop-color="#7c3c10"/></linearGradient><linearGradient id="gShirt" x1="0" y1="0" x2="0" y2="1"><stop offset="0" stop-color="#6cb4f0"/><stop offset="1" stop-color="#2c74d4"/></linearGradient><linearGradient id="gGear2" x1="0" y1="0" x2="1" y2="1"><stop offset="0" stop-color="#fafafc"/><stop offset="1" stop-color="#c4c8d8"/></linearGradient></defs></svg></div>
<div class="tb" style="left:718px;width:39px"><svg style="left:-1px;top:-1px" width="39" height="38" viewBox="0 0 39 38"><path d="M11.200 17.500V13.700a7.800 7.800 0 0 1 15.600 0V17.500" fill="none" stroke="#909090" stroke-width="4.800"/><path d="M11.200 17.500V13.700a7.800 7.800 0 0 1 15.600 0V17.500" fill="none" stroke="#f6f6f6" stroke-width="3"/><path d="M12.500 17.500V13.700a6.500 6.500 0 0 1 13 0V17.500" fill="none" stroke="#c4c4c4" stroke-width="1"/><rect x="7.200" y="17" width="23.600" height="16.600" rx="1.800" fill="url(#gLock)" stroke="#a85c0c" stroke-width=".8"/><rect x="7.200" y="17" width="23.600" height="16.600" rx="1.800" fill="url(#gLockH)"/><path d="M13 21.800h12M13 24.500h12M13 27.200h12M13 29.900h12" stroke="#ffe060" stroke-width="1.300"/><path d="M8.500 17.900h21" stroke="#fde6b0" stroke-width="1"/></svg></div>
<div class="tb" style="left:757px;width:39px"><svg style="left:-1px;top:-1px" width="39" height="38" viewBox="0 0 39 38"><rect x="16.300" y="4.300" width="2.600" height="4.500" rx="1" fill="#a8b8cc" stroke="#7c8ca0" stroke-width=".5"/><path d="M3.800 16l8.200-7l10.200 11.100v10.200l-17.200-2.700z" fill="#d4e6f6" stroke="#9cb4cc" stroke-width=".6"/><path d="M22.200 20.100l9.800-4.600v8.700l-9.800 6.100z" fill="#a4c0dc" stroke="#84a0bc" stroke-width=".6"/><path d="M12 9l10.900-3.200l10.600 8.900l-11.300 5.400z" fill="#c85420" stroke="#9c3c10" stroke-width=".6" stroke-linejoin="round"/><path d="M12 9l10.900-3.200l3 2.500l-11 3.600z" fill="#e07438" opacity=".7"/><path d="M3 16.800l9-7.800l1.200 1.300l-9 7.800z" fill="#e8f0f8" stroke="#a8bccc" stroke-width=".4"/><path d="M15.500 22l3 .7v7.600l-3-.5z" fill="#3c3c44"/><path d="M8 19.500l4 .8v3.700l-4-.7z" fill="#2c3038"/><path d="M13 30l6 .8l3.500 1l-4 .5z" fill="#b0b0b0" opacity=".6"/></svg></div>
<div class="tb" style="left:796px;width:39px"><svg style="left:-1px;top:-1px" width="39" height="38" viewBox="0 0 39 38"><circle cx="19.900" cy="18" r="15" fill="#f6f7f9" stroke="#c4c8d0" stroke-width=".8"/><circle cx="19.900" cy="18" r="10.600" fill="url(#gHelp)"/><path d="M10.500 14a10 10 0 0 1 18.800 0c-5-2.500-13-2.500-18.800 0z" fill="#fff" opacity=".25"/><text x="19.900" y="25.800" text-anchor="middle" font-family="Liberation Sans" font-weight="bold" font-size="21" fill="#fff" letter-spacing="0">?</text></svg></div>
<!-- search field -->
<div class="sunk" style="left:12px;top:98px;width:204px;height:22px"></div>
<div class="sb" style="left:217px;top:98px;width:21px;height:21px"><svg class="a" style="left:-1px;top:-1px" width="21" height="21" viewBox="0 0 21 21"><path d="M5.500 3h3v2h1v3h.5v8.700h-7v-8.700h1.500v-3h1z" fill="#000"/><rect x="4.200" y="8.500" width="1.800" height="6.500" fill="#9a9a9a"/><rect x="6" y="8.500" width="1.500" height="6.500" fill="#6a6a6a"/><path d="M5.500 6.300h3M6.300 4h1.400" stroke="#a0a0a0" stroke-width=".9"/><g transform="translate(20,0) scale(-1,1)"><path d="M5.500 3h3v2h1v3h.5v8.700h-7v-8.700h1.500v-3h1z" fill="#000"/><rect x="4.200" y="8.500" width="1.800" height="6.500" fill="#9a9a9a"/><rect x="6" y="8.500" width="1.500" height="6.500" fill="#6a6a6a"/><path d="M5.500 6.300h3M6.300 4h1.400" stroke="#a0a0a0" stroke-width=".9"/></g><rect x="7" y="9.300" width="6" height="3.600" fill="#000"/><path d="M7.500 10.300h5M7.500 12h5" stroke="#c8c8c8" stroke-width=".8"/></svg></div>
<div class="sb" style="left:242px;top:98px;width:21px;height:21px"><svg class="a" style="left:-1px;top:-1px" width="21" height="21" viewBox="0 0 21 21"><path d="M6.800 2.800h3.200v3.900h3.300v2.900h-3.300v3.500h-3.200v-3.500h-4.500v-2.900h4.500z" transform="translate(5.4,5.4)" fill="#000"/><path d="M6.800 2.800h3.200v3.900h3.300v2.900h-3.300v3.500h-3.200v-3.500h-4.500v-2.900h4.500z" transform="translate(4.4,4.4)" fill="#fff"/><path d="M6.800 2.800h3.200v3.900h3.300v2.900h-3.300v3.500h-3.200v-3.500h-4.500v-2.900h4.500z" transform="translate(3.2,3.2)" fill="#000"/><path d="M6.800 2.800h3.200v3.900h3.300v2.900h-3.300v3.500h-3.200v-3.500h-4.500v-2.900h4.500z" transform="translate(2.2,2.2)" fill="#fff"/><path d="M6.800 2.800h3.200v3.900h3.300v2.900h-3.300v3.500h-3.200v-3.500h-4.500v-2.900h4.500z" transform="translate(.9,.9)" fill="#000"/><path d="M6.800 2.800h3.200v3.900h3.300v2.900h-3.300v3.500h-3.200v-3.500h-4.500v-2.900h4.500z" fill="#fff" stroke="#000" stroke-width=".35"/></svg></div>
<div class="sb" style="left:263px;top:98px;width:21px;height:21px"><svg class="a" style="left:-1px;top:-1px" width="21" height="21" viewBox="0 0 21 21"><rect x="8.2" y="12.2" width="10" height="2.900" fill="#000"/><rect x="7.5" y="11.5" width="9.700" height="2.300" fill="#fff"/><rect x="5.6" y="9.8" width="10" height="2.900" fill="#000"/><rect x="4.9" y="9.1" width="9.700" height="2.300" fill="#fff"/><rect x="3.0" y="7.4" width="10" height="2.900" fill="#000"/><rect x="2.3" y="6.7" width="9.700" height="2.300" fill="#fff"/></svg></div>
<!-- v splitter -->
<div class="a" style="left:286px;top:100px;width:7px;height:615px;background:linear-gradient(90deg,#f8f8f8 0,#f8f8f8 1px,#a8a8a8 1px,#a8a8a8 2px,#fff 2px,#fff 3px,#a8a8a8 3px,#a8a8a8 4px,#fff 4px,#fff 5px,#a8a8a8 5px,#a8a8a8 6px,#f8f8f8 6px)"></div>
<!-- tree box -->
<div class="sunk" style="left:12px;top:121px;width:271px;height:481px"></div>
<!-- tree scrollbar -->
<div class="a" style="left:264px;top:123px;width:17px;height:477px;background:#efefef"></div>
<svg class="a" style="left:264px;top:123px" width="17" height="477" viewBox="0 0 17 477">
 <path d="M5 11.500l3.500-4l3.500 4z" fill="#2a2a2a"/><path d="M5 11.500l3.500-1.500l3.500 1.500z" fill="#777"/>
 <path d="M5 467.500l3.500 4l3.500-4z" fill="#2a2a2a"/>
 <rect x=".5" y="18.500" width="14" height="308" rx="2" fill="url(#gThumb)" stroke="#969696"/><rect x="1.500" y="19.500" width="12" height="306" rx="1.500" fill="none" stroke="#fff" stroke-opacity=".7"/>
 <path d="M4 169.500h7M4 172.500h7M4 175.500h7" stroke="#fff" stroke-width="1"/><path d="M4 168.500h7M4 171.500h7M4 174.500h7" stroke="#4c4c4c" stroke-width="1"/>
 <defs><linearGradient id="gThumb" x1="0" y1="0" x2="1" y2="0"><stop offset="0" stop-color="#f6f6f6"/><stop offset=".45" stop-color="#ececec"/><stop offset=".5" stop-color="#dcdce0"/><stop offset="1" stop-color="#c6c6ca"/></linearGradient></defs>
</svg>
<!-- h splitter -->
<div class="a" style="left:12px;top:602px;width:271px;height:7px;background:linear-gradient(#f8f8f8 0,#f8f8f8 1px,#a8a8a8 1px,#a8a8a8 2px,#fff 2px,#fff 3px,#a8a8a8 3px,#a8a8a8 4px,#fff 4px,#fff 5px,#a8a8a8 5px,#a8a8a8 6px,#f8f8f8 6px)"></div>
<!-- text area -->
<div class="sunk" style="left:12px;top:609px;width:270px;height:108px"></div>
<div class="a" style="left:264px;top:611px;width:16px;height:104px;background:#efefef"></div>
<svg class="a" style="left:264px;top:611px" width="17" height="104" viewBox="0 0 17 104">
 <path d="M5 11.500l3.500-4l3.500 4z" fill="#a0a0a0"/><path d="M5 95l3.500 4l3.500-4z" fill="#a0a0a0"/></svg>
<div class="a" style="left:14px;top:123px;width:250px;height:477px;overflow:hidden"><div class="a" style="left:-14px;top:-123px;width:300px;height:700px"><div class="a" style="left:33px;top:141px;width:231px;height:18px;background:#eeeeee"></div><div class="dv" style="left:22px;top:141px;height:470px"></div><div class="dh" style="left:23px;top:151px;width:10px"></div><div class="dh" style="left:27px;top:169px;width:6px"></div><div class="dv" style="left:41px;top:177px;height:430px"></div><div class="dv" style="left:60px;top:267px;height:117px"></div><svg class="a" style="left:14px;top:124px" width="16" height="16" viewBox="0 0 16 16"><rect x="1" y="1" width="13" height="10.500" fill="#000"/><path d="M1 11.500v-10.500h13l-1.500 1.500h-10v7.500z" fill="#888"/><rect x="2.500" y="2.500" width="10" height="7.500" fill="#fff"/><path d="M4.700 7.800h5l-.8-1.300h-3.400z" fill="#081078"/><path d="M6.500 6.500l.7-2.300l.7 2.300z" fill="#081078"/><path d="M2 14.500h11M5 12.500h5" stroke="#000" stroke-width="1.600"/><path d="M7.500 11v2" stroke="#000" stroke-width="3"/></svg><div class="ti" style="left:35px;top:123px">Your Company Name</div><svg class="a" style="left:32px;top:142px" width="18" height="16" viewBox="0 0 18 16"><path d="M6 2.500h7v9h-7z" fill="#dfeaf4" stroke="#d8a860" stroke-width="1.300"/><path d="M8 4h3v6h-3z" fill="#c4dcf0"/><path d="M1.500 8h5v5h-5z" fill="#f0a020"/><circle cx="3" cy="13.500" r="1.300" fill="#f0b040"/><circle cx="9" cy="13.500" r="1.300" fill="#f0b040"/><path d="M13 4v9h4" fill="none" stroke="#b4b4b4" stroke-width="1.200"/></svg><div class="ti" style="left:57px;top:141px">Inventory</div><div class="ex" style="left:18px;top:165px"></div><svg class="a" style="left:32px;top:160px" width="18" height="17" viewBox="0 0 18 17"><path d="M1 8.500l8-4.500l8 5v4l-8 3.500l-8-4z" fill="#b8603c" stroke="#7c3c1c" stroke-width=".6"/><path d="M1 8.500l8-4.500l8 5l-8 3.500z" fill="#8c5a48"/><path d="M5.500 1.500h1.500v6h-1.500zM8.500 1h1.500v6h-1.500z" fill="#d89868" stroke="#9c5c34" stroke-width=".4"/><path d="M1 9v4l8 4v-4z" fill="#c87048"/></svg><div class="ti" style="left:54px;top:159px">Processes</div><div class="dh" style="left:46px;top:187px;width:6px"></div><div class="ex p" style="left:37px;top:183px"></div><svg class="a" style="left:51px;top:177px" width="18" height="18" viewBox="0 0 18 18"><polygon points="6.4,5.5 6.2,6.5 5.4,6.4 4.9,7.0 5.1,7.8 4.1,8.1 3.8,7.4 3.1,7.2 2.5,7.8 1.7,7.1 2.2,6.4 1.9,5.7 1.2,5.5 1.4,4.5 2.2,4.6 2.7,4.0 2.5,3.2 3.5,2.9 3.8,3.6 4.5,3.8 5.1,3.2 5.9,3.9 5.4,4.6 5.7,5.3" fill="#e4e4e8" stroke="#c8c8d0" stroke-width=".6" stroke-linejoin="round"/><circle cx="3.8" cy="5.5" r="0.8" fill="#f4f4f4"/><polygon points="16.8,13.8 16.5,15.2 15.5,15.1 14.8,15.8 15.1,16.8 13.7,17.3 13.3,16.3 12.3,16.1 11.6,16.8 10.5,15.9 11.1,15.1 10.8,14.1 9.8,13.8 10.1,12.4 11.1,12.5 11.8,11.8 11.5,10.8 12.9,10.3 13.3,11.3 14.3,11.5 15.1,10.8 16.1,11.7 15.5,12.5 15.8,13.5" fill="#3cb444" stroke="#1c8424" stroke-width=".6" stroke-linejoin="round"/><circle cx="13.3" cy="13.8" r="1.1" fill="#b4e8b4"/><polygon points="14.8,6.3 14.4,8.2 13.0,8.0 12.1,9.1 12.4,10.5 10.6,11.1 10.0,9.8 8.6,9.5 7.6,10.5 6.2,9.2 7.0,8.0 6.6,6.7 5.2,6.3 5.6,4.4 7.0,4.6 7.9,3.5 7.6,2.1 9.4,1.5 10.0,2.8 11.4,3.1 12.4,2.1 13.8,3.4 13.0,4.6 13.4,5.9" fill="#4c80f0" stroke="#2c58cc" stroke-width=".6" stroke-linejoin="round"/><circle cx="10.0" cy="6.3" r="1.4" fill="#bcd0fc"/><polygon points="9.6,13.6 9.3,15.3 8.0,15.1 7.2,16.1 7.5,17.3 5.8,17.9 5.3,16.7 4.1,16.4 3.2,17.3 1.9,16.2 2.6,15.2 2.2,14.0 1.0,13.6 1.3,11.9 2.6,12.1 3.4,11.1 3.1,9.9 4.8,9.3 5.3,10.5 6.5,10.8 7.5,9.9 8.7,11.0 8.0,12.0 8.4,13.2" fill="#ecd83c" stroke="#b4a018" stroke-width=".6" stroke-linejoin="round"/><circle cx="5.3" cy="13.6" r="1.3" fill="#c8a828"/></svg><div class="ti" style="left:73px;top:177px">Calibration</div><div class="dh" style="left:46px;top:205px;width:6px"></div><div class="ex p" style="left:37px;top:201px"></div><svg class="a" style="left:51px;top:195px" width="18" height="18" viewBox="0 0 18 18"><polygon points="6.4,5.5 6.2,6.5 5.4,6.4 4.9,7.0 5.1,7.8 4.1,8.1 3.8,7.4 3.1,7.2 2.5,7.8 1.7,7.1 2.2,6.4 1.9,5.7 1.2,5.5 1.4,4.5 2.2,4.6 2.7,4.0 2.5,3.2 3.5,2.9 3.8,3.6 4.5,3.8 5.1,3.2 5.9,3.9 5.4,4.6 5.7,5.3" fill="#e4e4e8" stroke="#c8c8d0" stroke-width=".6" stroke-linejoin="round"/><circle cx="3.8" cy="5.5" r="0.8" fill="#f4f4f4"/><polygon points="16.8,13.8 16.5,15.2 15.5,15.1 14.8,15.8 15.1,16.8 13.7,17.3 13.3,16.3 12.3,16.1 11.6,16.8 10.5,15.9 11.1,15.1 10.8,14.1 9.8,13.8 10.1,12.4 11.1,12.5 11.8,11.8 11.5,10.8 12.9,10.3 13.3,11.3 14.3,11.5 15.1,10.8 16.1,11.7 15.5,12.5 15.8,13.5" fill="#3cb444" stroke="#1c8424" stroke-width=".6" stroke-linejoin="round"/><circle cx="13.3" cy="13.8" r="1.1" fill="#b4e8b4"/><polygon points="14.8,6.3 14.4,8.2 13.0,8.0 12.1,9.1 12.4,10.5 10.6,11.1 10.0,9.8 8.6,9.5 7.6,10.5 6.2,9.2 7.0,8.0 6.6,6.7 5.2,6.3 5.6,4.4 7.0,4.6 7.9,3.5 7.6,2.1 9.4,1.5 10.0,2.8 11.4,3.1 12.4,2.1 13.8,3.4 13.0,4.6 13.4,5.9" fill="#4c80f0" stroke="#2c58cc" stroke-width=".6" stroke-linejoin="round"/><circle cx="10.0" cy="6.3" r="1.4" fill="#bcd0fc"/><polygon points="9.6,13.6 9.3,15.3 8.0,15.1 7.2,16.1 7.5,17.3 5.8,17.9 5.3,16.7 4.1,16.4 3.2,17.3 1.9,16.2 2.6,15.2 2.2,14.0 1.0,13.6 1.3,11.9 2.6,12.1 3.4,11.1 3.1,9.9 4.8,9.3 5.3,10.5 6.5,10.8 7.5,9.9 8.7,11.0 8.0,12.0 8.4,13.2" fill="#ecd83c" stroke="#b4a018" stroke-width=".6" stroke-linejoin="round"/><circle cx="5.3" cy="13.6" r="1.3" fill="#c8a828"/></svg><div class="ti" style="left:73px;top:195px">Chromic Acid</div><div class="dh" style="left:46px;top:223px;width:6px"></div><div class="ex p" style="left:37px;top:219px"></div><svg class="a" style="left:51px;top:213px" width="18" height="18" viewBox="0 0 18 18"><polygon points="6.4,5.5 6.2,6.5 5.4,6.4 4.9,7.0 5.1,7.8 4.1,8.1 3.8,7.4 3.1,7.2 2.5,7.8 1.7,7.1 2.2,6.4 1.9,5.7 1.2,5.5 1.4,4.5 2.2,4.6 2.7,4.0 2.5,3.2 3.5,2.9 3.8,3.6 4.5,3.8 5.1,3.2 5.9,3.9 5.4,4.6 5.7,5.3" fill="#e4e4e8" stroke="#c8c8d0" stroke-width=".6" stroke-linejoin="round"/><circle cx="3.8" cy="5.5" r="0.8" fill="#f4f4f4"/><polygon points="16.8,13.8 16.5,15.2 15.5,15.1 14.8,15.8 15.1,16.8 13.7,17.3 13.3,16.3 12.3,16.1 11.6,16.8 10.5,15.9 11.1,15.1 10.8,14.1 9.8,13.8 10.1,12.4 11.1,12.5 11.8,11.8 11.5,10.8 12.9,10.3 13.3,11.3 14.3,11.5 15.1,10.8 16.1,11.7 15.5,12.5 15.8,13.5" fill="#3cb444" stroke="#1c8424" stroke-width=".6" stroke-linejoin="round"/><circle cx="13.3" cy="13.8" r="1.1" fill="#b4e8b4"/><polygon points="14.8,6.3 14.4,8.2 13.0,8.0 12.1,9.1 12.4,10.5 10.6,11.1 10.0,9.8 8.6,9.5 7.6,10.5 6.2,9.2 7.0,8.0 6.6,6.7 5.2,6.3 5.6,4.4 7.0,4.6 7.9,3.5 7.6,2.1 9.4,1.5 10.0,2.8 11.4,3.1 12.4,2.1 13.8,3.4 13.0,4.6 13.4,5.9" fill="#4c80f0" stroke="#2c58cc" stroke-width=".6" stroke-linejoin="round"/><circle cx="10.0" cy="6.3" r="1.4" fill="#bcd0fc"/><polygon points="9.6,13.6 9.3,15.3 8.0,15.1 7.2,16.1 7.5,17.3 5.8,17.9 5.3,16.7 4.1,16.4 3.2,17.3 1.9,16.2 2.6,15.2 2.2,14.0 1.0,13.6 1.3,11.9 2.6,12.1 3.4,11.1 3.1,9.9 4.8,9.3 5.3,10.5 6.5,10.8 7.5,9.9 8.7,11.0 8.0,12.0 8.4,13.2" fill="#ecd83c" stroke="#b4a018" stroke-width=".6" stroke-linejoin="round"/><circle cx="5.3" cy="13.6" r="1.3" fill="#c8a828"/></svg><div class="ti" style="left:73px;top:213px">Cleaners</div><div class="dh" style="left:46px;top:241px;width:6px"></div><div class="ex p" style="left:37px;top:237px"></div><svg class="a" style="left:51px;top:231px" width="18" height="18" viewBox="0 0 18 18"><polygon points="6.4,5.5 6.2,6.5 5.4,6.4 4.9,7.0 5.1,7.8 4.1,8.1 3.8,7.4 3.1,7.2 2.5,7.8 1.7,7.1 2.2,6.4 1.9,5.7 1.2,5.5 1.4,4.5 2.2,4.6 2.7,4.0 2.5,3.2 3.5,2.9 3.8,3.6 4.5,3.8 5.1,3.2 5.9,3.9 5.4,4.6 5.7,5.3" fill="#e4e4e8" stroke="#c8c8d0" stroke-width=".6" stroke-linejoin="round"/><circle cx="3.8" cy="5.5" r="0.8" fill="#f4f4f4"/><polygon points="16.8,13.8 16.5,15.2 15.5,15.1 14.8,15.8 15.1,16.8 13.7,17.3 13.3,16.3 12.3,16.1 11.6,16.8 10.5,15.9 11.1,15.1 10.8,14.1 9.8,13.8 10.1,12.4 11.1,12.5 11.8,11.8 11.5,10.8 12.9,10.3 13.3,11.3 14.3,11.5 15.1,10.8 16.1,11.7 15.5,12.5 15.8,13.5" fill="#3cb444" stroke="#1c8424" stroke-width=".6" stroke-linejoin="round"/><circle cx="13.3" cy="13.8" r="1.1" fill="#b4e8b4"/><polygon points="14.8,6.3 14.4,8.2 13.0,8.0 12.1,9.1 12.4,10.5 10.6,11.1 10.0,9.8 8.6,9.5 7.6,10.5 6.2,9.2 7.0,8.0 6.6,6.7 5.2,6.3 5.6,4.4 7.0,4.6 7.9,3.5 7.6,2.1 9.4,1.5 10.0,2.8 11.4,3.1 12.4,2.1 13.8,3.4 13.0,4.6 13.4,5.9" fill="#4c80f0" stroke="#2c58cc" stroke-width=".6" stroke-linejoin="round"/><circle cx="10.0" cy="6.3" r="1.4" fill="#bcd0fc"/><polygon points="9.6,13.6 9.3,15.3 8.0,15.1 7.2,16.1 7.5,17.3 5.8,17.9 5.3,16.7 4.1,16.4 3.2,17.3 1.9,16.2 2.6,15.2 2.2,14.0 1.0,13.6 1.3,11.9 2.6,12.1 3.4,11.1 3.1,9.9 4.8,9.3 5.3,10.5 6.5,10.8 7.5,9.9 8.7,11.0 8.0,12.0 8.4,13.2" fill="#ecd83c" stroke="#b4a018" stroke-width=".6" stroke-linejoin="round"/><circle cx="5.3" cy="13.6" r="1.3" fill="#c8a828"/></svg><div class="ti" style="left:73px;top:231px">Cupric Process</div><div class="dh" style="left:46px;top:259px;width:6px"></div><div class="ex" style="left:37px;top:255px"></div><svg class="a" style="left:51px;top:249px" width="18" height="18" viewBox="0 0 18 18"><polygon points="6.4,5.5 6.2,6.5 5.4,6.4 4.9,7.0 5.1,7.8 4.1,8.1 3.8,7.4 3.1,7.2 2.5,7.8 1.7,7.1 2.2,6.4 1.9,5.7 1.2,5.5 1.4,4.5 2.2,4.6 2.7,4.0 2.5,3.2 3.5,2.9 3.8,3.6 4.5,3.8 5.1,3.2 5.9,3.9 5.4,4.6 5.7,5.3" fill="#e4e4e8" stroke="#c8c8d0" stroke-width=".6" stroke-linejoin="round"/><circle cx="3.8" cy="5.5" r="0.8" fill="#f4f4f4"/><polygon points="16.8,13.8 16.5,15.2 15.5,15.1 14.8,15.8 15.1,16.8 13.7,17.3 13.3,16.3 12.3,16.1 11.6,16.8 10.5,15.9 11.1,15.1 10.8,14.1 9.8,13.8 10.1,12.4 11.1,12.5 11.8,11.8 11.5,10.8 12.9,10.3 13.3,11.3 14.3,11.5 15.1,10.8 16.1,11.7 15.5,12.5 15.8,13.5" fill="#3cb444" stroke="#1c8424" stroke-width=".6" stroke-linejoin="round"/><circle cx="13.3" cy="13.8" r="1.1" fill="#b4e8b4"/><polygon points="14.8,6.3 14.4,8.2 13.0,8.0 12.1,9.1 12.4,10.5 10.6,11.1 10.0,9.8 8.6,9.5 7.6,10.5 6.2,9.2 7.0,8.0 6.6,6.7 5.2,6.3 5.6,4.4 7.0,4.6 7.9,3.5 7.6,2.1 9.4,1.5 10.0,2.8 11.4,3.1 12.4,2.1 13.8,3.4 13.0,4.6 13.4,5.9" fill="#4c80f0" stroke="#2c58cc" stroke-width=".6" stroke-linejoin="round"/><circle cx="10.0" cy="6.3" r="1.4" fill="#bcd0fc"/><polygon points="9.6,13.6 9.3,15.3 8.0,15.1 7.2,16.1 7.5,17.3 5.8,17.9 5.3,16.7 4.1,16.4 3.2,17.3 1.9,16.2 2.6,15.2 2.2,14.0 1.0,13.6 1.3,11.9 2.6,12.1 3.4,11.1 3.1,9.9 4.8,9.3 5.3,10.5 6.5,10.8 7.5,9.9 8.7,11.0 8.0,12.0 8.4,13.2" fill="#ecd83c" stroke="#b4a018" stroke-width=".6" stroke-linejoin="round"/><circle cx="5.3" cy="13.6" r="1.3" fill="#c8a828"/></svg><div class="ti" style="left:73px;top:249px">Demo Process</div><div class="dh" style="left:61px;top:277px;width:12px"></div><svg class="a" style="left:72px;top:268px" width="14" height="16" viewBox="0 0 14 16"><path d="M4.200 1.400h5.600" stroke="#a8b0b8" stroke-width="1.200"/><rect x="5.500" y="2" width="3" height="4.500" fill="#e4e8ec" stroke="#b4bcc4" stroke-width=".5"/><path d="M5.500 6.200h3l3.300 5.800c.6 1.200-.2 2-1.300 2h-7c-1.100 0-1.900-.8-1.300-2z" fill="url(#gFl)"/><path d="M4.500 9.500l-1.300 2.800" stroke="#a4d4fc" stroke-width="1" fill="none"/><defs><linearGradient id="gFl" x1="0" y1="0" x2="0" y2="1"><stop offset="0" stop-color="#3c8ce0"/><stop offset=".6" stop-color="#4ca4f0"/><stop offset="1" stop-color="#1c64c8"/></linearGradient></defs></svg><div class="ti" style="left:92px;top:267px">00 - Copy of Test</div><div class="dh" style="left:61px;top:295px;width:12px"></div><svg class="a" style="left:72px;top:286px" width="14" height="16" viewBox="0 0 14 16"><path d="M4.200 1.400h5.600" stroke="#a8b0b8" stroke-width="1.200"/><rect x="5.500" y="2" width="3" height="4.500" fill="#e4e8ec" stroke="#b4bcc4" stroke-width=".5"/><path d="M5.500 6.200h3l3.300 5.800c.6 1.200-.2 2-1.300 2h-7c-1.100 0-1.900-.8-1.300-2z" fill="url(#gFl)"/><path d="M4.500 9.500l-1.300 2.800" stroke="#a4d4fc" stroke-width="1" fill="none"/><defs><linearGradient id="gFl" x1="0" y1="0" x2="0" y2="1"><stop offset="0" stop-color="#3c8ce0"/><stop offset=".6" stop-color="#4ca4f0"/><stop offset="1" stop-color="#1c64c8"/></linearGradient></defs></svg><div class="ti" style="left:92px;top:285px">00 - Test</div><div class="dh" style="left:61px;top:313px;width:12px"></div><svg class="a" style="left:72px;top:304px" width="14" height="16" viewBox="0 0 14 16"><path d="M4.200 1.400h5.600" stroke="#a8b0b8" stroke-width="1.200"/><rect x="5.500" y="2" width="3" height="4.500" fill="#e4e8ec" stroke="#b4bcc4" stroke-width=".5"/><path d="M5.500 6.200h3l3.300 5.800c.6 1.200-.2 2-1.300 2h-7c-1.100 0-1.900-.8-1.300-2z" fill="url(#gFl)"/><path d="M4.500 9.500l-1.300 2.800" stroke="#a4d4fc" stroke-width="1" fill="none"/><defs><linearGradient id="gFl" x1="0" y1="0" x2="0" y2="1"><stop offset="0" stop-color="#3c8ce0"/><stop offset=".6" stop-color="#4ca4f0"/><stop offset="1" stop-color="#1c64c8"/></linearGradient></defs></svg><div class="ti" style="left:92px;top:303px">01 - Conditioner</div><div class="dh" style="left:61px;top:331px;width:12px"></div><svg class="a" style="left:72px;top:322px" width="14" height="16" viewBox="0 0 14 16"><path d="M4.200 1.400h5.600" stroke="#a8b0b8" stroke-width="1.200"/><rect x="5.500" y="2" width="3" height="4.500" fill="#e4e8ec" stroke="#b4bcc4" stroke-width=".5"/><path d="M5.500 6.200h3l3.300 5.800c.6 1.200-.2 2-1.300 2h-7c-1.100 0-1.900-.8-1.300-2z" fill="url(#gFl)"/><path d="M4.500 9.500l-1.300 2.800" stroke="#a4d4fc" stroke-width="1" fill="none"/><defs><linearGradient id="gFl" x1="0" y1="0" x2="0" y2="1"><stop offset="0" stop-color="#3c8ce0"/><stop offset=".6" stop-color="#4ca4f0"/><stop offset="1" stop-color="#1c64c8"/></linearGradient></defs></svg><div class="ti" style="left:92px;top:321px">06 - Demo Chemistry</div><div class="dh" style="left:61px;top:349px;width:12px"></div><svg class="a" style="left:72px;top:340px" width="14" height="16" viewBox="0 0 14 16"><path d="M4.200 1.400h5.600" stroke="#a8b0b8" stroke-width="1.200"/><rect x="5.500" y="2" width="3" height="4.500" fill="#e4e8ec" stroke="#b4bcc4" stroke-width=".5"/><path d="M5.500 6.200h3l3.300 5.800c.6 1.200-.2 2-1.300 2h-7c-1.100 0-1.900-.8-1.300-2z" fill="url(#gFl)"/><path d="M4.500 9.500l-1.300 2.800" stroke="#a4d4fc" stroke-width="1" fill="none"/><defs><linearGradient id="gFl" x1="0" y1="0" x2="0" y2="1"><stop offset="0" stop-color="#3c8ce0"/><stop offset=".6" stop-color="#4ca4f0"/><stop offset="1" stop-color="#1c64c8"/></linearGradient></defs></svg><div class="ti" style="left:92px;top:339px">12 - Cleaner X</div><div class="dh" style="left:61px;top:367px;width:12px"></div><svg class="a" style="left:72px;top:358px" width="14" height="16" viewBox="0 0 14 16"><path d="M4.200 1.400h5.600" stroke="#a8b0b8" stroke-width="1.200"/><rect x="5.500" y="2" width="3" height="4.500" fill="#e4e8ec" stroke="#b4bcc4" stroke-width=".5"/><path d="M5.500 6.200h3l3.300 5.800c.6 1.200-.2 2-1.300 2h-7c-1.100 0-1.900-.8-1.300-2z" fill="url(#gFl)"/><path d="M4.500 9.500l-1.300 2.800" stroke="#a4d4fc" stroke-width="1" fill="none"/><defs><linearGradient id="gFl" x1="0" y1="0" x2="0" y2="1"><stop offset="0" stop-color="#3c8ce0"/><stop offset=".6" stop-color="#4ca4f0"/><stop offset="1" stop-color="#1c64c8"/></linearGradient></defs></svg><div class="ti" style="left:92px;top:357px">13 - Copper</div><div class="dh" style="left:61px;top:385px;width:12px"></div><svg class="a" style="left:72px;top:376px" width="14" height="16" viewBox="0 0 14 16"><path d="M4.200 1.400h5.600" stroke="#a8b0b8" stroke-width="1.200"/><rect x="5.500" y="2" width="3" height="4.500" fill="#e4e8ec" stroke="#b4bcc4" stroke-width=".5"/><path d="M5.500 6.200h3l3.300 5.800c.6 1.200-.2 2-1.300 2h-7c-1.100 0-1.900-.8-1.300-2z" fill="url(#gFl)"/><path d="M4.500 9.500l-1.300 2.800" stroke="#a4d4fc" stroke-width="1" fill="none"/><defs><linearGradient id="gFl" x1="0" y1="0" x2="0" y2="1"><stop offset="0" stop-color="#3c8ce0"/><stop offset=".6" stop-color="#4ca4f0"/><stop offset="1" stop-color="#1c64c8"/></linearGradient></defs></svg><div class="ti" style="left:92px;top:375px">16 - Etch</div><div class="dh" style="left:46px;top:403px;width:6px"></div><div class="ex p" style="left:37px;top:399px"></div><svg class="a" style="left:51px;top:393px" width="18" height="18" viewBox="0 0 18 18"><polygon points="6.4,5.5 6.2,6.5 5.4,6.4 4.9,7.0 5.1,7.8 4.1,8.1 3.8,7.4 3.1,7.2 2.5,7.8 1.7,7.1 2.2,6.4 1.9,5.7 1.2,5.5 1.4,4.5 2.2,4.6 2.7,4.0 2.5,3.2 3.5,2.9 3.8,3.6 4.5,3.8 5.1,3.2 5.9,3.9 5.4,4.6 5.7,5.3" fill="#e4e4e8" stroke="#c8c8d0" stroke-width=".6" stroke-linejoin="round"/><circle cx="3.8" cy="5.5" r="0.8" fill="#f4f4f4"/><polygon points="16.8,13.8 16.5,15.2 15.5,15.1 14.8,15.8 15.1,16.8 13.7,17.3 13.3,16.3 12.3,16.1 11.6,16.8 10.5,15.9 11.1,15.1 10.8,14.1 9.8,13.8 10.1,12.4 11.1,12.5 11.8,11.8 11.5,10.8 12.9,10.3 13.3,11.3 14.3,11.5 15.1,10.8 16.1,11.7 15.5,12.5 15.8,13.5" fill="#3cb444" stroke="#1c8424" stroke-width=".6" stroke-linejoin="round"/><circle cx="13.3" cy="13.8" r="1.1" fill="#b4e8b4"/><polygon points="14.8,6.3 14.4,8.2 13.0,8.0 12.1,9.1 12.4,10.5 10.6,11.1 10.0,9.8 8.6,9.5 7.6,10.5 6.2,9.2 7.0,8.0 6.6,6.7 5.2,6.3 5.6,4.4 7.0,4.6 7.9,3.5 7.6,2.1 9.4,1.5 10.0,2.8 11.4,3.1 12.4,2.1 13.8,3.4 13.0,4.6 13.4,5.9" fill="#4c80f0" stroke="#2c58cc" stroke-width=".6" stroke-linejoin="round"/><circle cx="10.0" cy="6.3" r="1.4" fill="#bcd0fc"/><polygon points="9.6,13.6 9.3,15.3 8.0,15.1 7.2,16.1 7.5,17.3 5.8,17.9 5.3,16.7 4.1,16.4 3.2,17.3 1.9,16.2 2.6,15.2 2.2,14.0 1.0,13.6 1.3,11.9 2.6,12.1 3.4,11.1 3.1,9.9 4.8,9.3 5.3,10.5 6.5,10.8 7.5,9.9 8.7,11.0 8.0,12.0 8.4,13.2" fill="#ecd83c" stroke="#b4a018" stroke-width=".6" stroke-linejoin="round"/><circle cx="5.3" cy="13.6" r="1.3" fill="#c8a828"/></svg><div class="ti" style="left:73px;top:393px">Desmear Process</div><div class="dh" style="left:46px;top:421px;width:6px"></div><div class="ex p" style="left:37px;top:417px"></div><svg class="a" style="left:51px;top:411px" width="18" height="18" viewBox="0 0 18 18"><polygon points="6.4,5.5 6.2,6.5 5.4,6.4 4.9,7.0 5.1,7.8 4.1,8.1 3.8,7.4 3.1,7.2 2.5,7.8 1.7,7.1 2.2,6.4 1.9,5.7 1.2,5.5 1.4,4.5 2.2,4.6 2.7,4.0 2.5,3.2 3.5,2.9 3.8,3.6 4.5,3.8 5.1,3.2 5.9,3.9 5.4,4.6 5.7,5.3" fill="#e4e4e8" stroke="#c8c8d0" stroke-width=".6" stroke-linejoin="round"/><circle cx="3.8" cy="5.5" r="0.8" fill="#f4f4f4"/><polygon points="16.8,13.8 16.5,15.2 15.5,15.1 14.8,15.8 15.1,16.8 13.7,17.3 13.3,16.3 12.3,16.1 11.6,16.8 10.5,15.9 11.1,15.1 10.8,14.1 9.8,13.8 10.1,12.4 11.1,12.5 11.8,11.8 11.5,10.8 12.9,10.3 13.3,11.3 14.3,11.5 15.1,10.8 16.1,11.7 15.5,12.5 15.8,13.5" fill="#3cb444" stroke="#1c8424" stroke-width=".6" stroke-linejoin="round"/><circle cx="13.3" cy="13.8" r="1.1" fill="#b4e8b4"/><polygon points="14.8,6.3 14.4,8.2 13.0,8.0 12.1,9.1 12.4,10.5 10.6,11.1 10.0,9.8 8.6,9.5 7.6,10.5 6.2,9.2 7.0,8.0 6.6,6.7 5.2,6.3 5.6,4.4 7.0,4.6 7.9,3.5 7.6,2.1 9.4,1.5 10.0,2.8 11.4,3.1 12.4,2.1 13.8,3.4 13.0,4.6 13.4,5.9" fill="#4c80f0" stroke="#2c58cc" stroke-width=".6" stroke-linejoin="round"/><circle cx="10.0" cy="6.3" r="1.4" fill="#bcd0fc"/><polygon points="9.6,13.6 9.3,15.3 8.0,15.1 7.2,16.1 7.5,17.3 5.8,17.9 5.3,16.7 4.1,16.4 3.2,17.3 1.9,16.2 2.6,15.2 2.2,14.0 1.0,13.6 1.3,11.9 2.6,12.1 3.4,11.1 3.1,9.9 4.8,9.3 5.3,10.5 6.5,10.8 7.5,9.9 8.7,11.0 8.0,12.0 8.4,13.2" fill="#ecd83c" stroke="#b4a018" stroke-width=".6" stroke-linejoin="round"/><circle cx="5.3" cy="13.6" r="1.3" fill="#c8a828"/></svg><div class="ti" style="left:73px;top:411px">Electroless Ni/Au</div><div class="dh" style="left:46px;top:439px;width:6px"></div><div class="ex p" style="left:37px;top:435px"></div><svg class="a" style="left:51px;top:429px" width="18" height="18" viewBox="0 0 18 18"><polygon points="6.4,5.5 6.2,6.5 5.4,6.4 4.9,7.0 5.1,7.8 4.1,8.1 3.8,7.4 3.1,7.2 2.5,7.8 1.7,7.1 2.2,6.4 1.9,5.7 1.2,5.5 1.4,4.5 2.2,4.6 2.7,4.0 2.5,3.2 3.5,2.9 3.8,3.6 4.5,3.8 5.1,3.2 5.9,3.9 5.4,4.6 5.7,5.3" fill="#e4e4e8" stroke="#c8c8d0" stroke-width=".6" stroke-linejoin="round"/><circle cx="3.8" cy="5.5" r="0.8" fill="#f4f4f4"/><polygon points="16.8,13.8 16.5,15.2 15.5,15.1 14.8,15.8 15.1,16.8 13.7,17.3 13.3,16.3 12.3,16.1 11.6,16.8 10.5,15.9 11.1,15.1 10.8,14.1 9.8,13.8 10.1,12.4 11.1,12.5 11.8,11.8 11.5,10.8 12.9,10.3 13.3,11.3 14.3,11.5 15.1,10.8 16.1,11.7 15.5,12.5 15.8,13.5" fill="#3cb444" stroke="#1c8424" stroke-width=".6" stroke-linejoin="round"/><circle cx="13.3" cy="13.8" r="1.1" fill="#b4e8b4"/><polygon points="14.8,6.3 14.4,8.2 13.0,8.0 12.1,9.1 12.4,10.5 10.6,11.1 10.0,9.8 8.6,9.5 7.6,10.5 6.2,9.2 7.0,8.0 6.6,6.7 5.2,6.3 5.6,4.4 7.0,4.6 7.9,3.5 7.6,2.1 9.4,1.5 10.0,2.8 11.4,3.1 12.4,2.1 13.8,3.4 13.0,4.6 13.4,5.9" fill="#4c80f0" stroke="#2c58cc" stroke-width=".6" stroke-linejoin="round"/><circle cx="10.0" cy="6.3" r="1.4" fill="#bcd0fc"/><polygon points="9.6,13.6 9.3,15.3 8.0,15.1 7.2,16.1 7.5,17.3 5.8,17.9 5.3,16.7 4.1,16.4 3.2,17.3 1.9,16.2 2.6,15.2 2.2,14.0 1.0,13.6 1.3,11.9 2.6,12.1 3.4,11.1 3.1,9.9 4.8,9.3 5.3,10.5 6.5,10.8 7.5,9.9 8.7,11.0 8.0,12.0 8.4,13.2" fill="#ecd83c" stroke="#b4a018" stroke-width=".6" stroke-linejoin="round"/><circle cx="5.3" cy="13.6" r="1.3" fill="#c8a828"/></svg><div class="ti" style="left:73px;top:429px">Electrolytic Copper</div><div class="dh" style="left:46px;top:457px;width:6px"></div><div class="ex p" style="left:37px;top:453px"></div><svg class="a" style="left:51px;top:447px" width="18" height="18" viewBox="0 0 18 18"><polygon points="6.4,5.5 6.2,6.5 5.4,6.4 4.9,7.0 5.1,7.8 4.1,8.1 3.8,7.4 3.1,7.2 2.5,7.8 1.7,7.1 2.2,6.4 1.9,5.7 1.2,5.5 1.4,4.5 2.2,4.6 2.7,4.0 2.5,3.2 3.5,2.9 3.8,3.6 4.5,3.8 5.1,3.2 5.9,3.9 5.4,4.6 5.7,5.3" fill="#e4e4e8" stroke="#c8c8d0" stroke-width=".6" stroke-linejoin="round"/><circle cx="3.8" cy="5.5" r="0.8" fill="#f4f4f4"/><polygon points="16.8,13.8 16.5,15.2 15.5,15.1 14.8,15.8 15.1,16.8 13.7,17.3 13.3,16.3 12.3,16.1 11.6,16.8 10.5,15.9 11.1,15.1 10.8,14.1 9.8,13.8 10.1,12.4 11.1,12.5 11.8,11.8 11.5,10.8 12.9,10.3 13.3,11.3 14.3,11.5 15.1,10.8 16.1,11.7 15.5,12.5 15.8,13.5" fill="#3cb444" stroke="#1c8424" stroke-width=".6" stroke-linejoin="round"/><circle cx="13.3" cy="13.8" r="1.1" fill="#b4e8b4"/><polygon points="14.8,6.3 14.4,8.2 13.0,8.0 12.1,9.1 12.4,10.5 10.6,11.1 10.0,9.8 8.6,9.5 7.6,10.5 6.2,9.2 7.0,8.0 6.6,6.7 5.2,6.3 5.6,4.4 7.0,4.6 7.9,3.5 7.6,2.1 9.4,1.5 10.0,2.8 11.4,3.1 12.4,2.1 13.8,3.4 13.0,4.6 13.4,5.9" fill="#4c80f0" stroke="#2c58cc" stroke-width=".6" stroke-linejoin="round"/><circle cx="10.0" cy="6.3" r="1.4" fill="#bcd0fc"/><polygon points="9.6,13.6 9.3,15.3 8.0,15.1 7.2,16.1 7.5,17.3 5.8,17.9 5.3,16.7 4.1,16.4 3.2,17.3 1.9,16.2 2.6,15.2 2.2,14.0 1.0,13.6 1.3,11.9 2.6,12.1 3.4,11.1 3.1,9.9 4.8,9.3 5.3,10.5 6.5,10.8 7.5,9.9 8.7,11.0 8.0,12.0 8.4,13.2" fill="#ecd83c" stroke="#b4a018" stroke-width=".6" stroke-linejoin="round"/><circle cx="5.3" cy="13.6" r="1.3" fill="#c8a828"/></svg><div class="ti" style="left:73px;top:447px">Electrolytic Gold</div><div class="dh" style="left:46px;top:475px;width:6px"></div><div class="ex p" style="left:37px;top:471px"></div><svg class="a" style="left:51px;top:465px" width="18" height="18" viewBox="0 0 18 18"><polygon points="6.4,5.5 6.2,6.5 5.4,6.4 4.9,7.0 5.1,7.8 4.1,8.1 3.8,7.4 3.1,7.2 2.5,7.8 1.7,7.1 2.2,6.4 1.9,5.7 1.2,5.5 1.4,4.5 2.2,4.6 2.7,4.0 2.5,3.2 3.5,2.9 3.8,3.6 4.5,3.8 5.1,3.2 5.9,3.9 5.4,4.6 5.7,5.3" fill="#e4e4e8" stroke="#c8c8d0" stroke-width=".6" stroke-linejoin="round"/><circle cx="3.8" cy="5.5" r="0.8" fill="#f4f4f4"/><polygon points="16.8,13.8 16.5,15.2 15.5,15.1 14.8,15.8 15.1,16.8 13.7,17.3 13.3,16.3 12.3,16.1 11.6,16.8 10.5,15.9 11.1,15.1 10.8,14.1 9.8,13.8 10.1,12.4 11.1,12.5 11.8,11.8 11.5,10.8 12.9,10.3 13.3,11.3 14.3,11.5 15.1,10.8 16.1,11.7 15.5,12.5 15.8,13.5" fill="#3cb444" stroke="#1c8424" stroke-width=".6" stroke-linejoin="round"/><circle cx="13.3" cy="13.8" r="1.1" fill="#b4e8b4"/><polygon points="14.8,6.3 14.4,8.2 13.0,8.0 12.1,9.1 12.4,10.5 10.6,11.1 10.0,9.8 8.6,9.5 7.6,10.5 6.2,9.2 7.0,8.0 6.6,6.7 5.2,6.3 5.6,4.4 7.0,4.6 7.9,3.5 7.6,2.1 9.4,1.5 10.0,2.8 11.4,3.1 12.4,2.1 13.8,3.4 13.0,4.6 13.4,5.9" fill="#4c80f0" stroke="#2c58cc" stroke-width=".6" stroke-linejoin="round"/><circle cx="10.0" cy="6.3" r="1.4" fill="#bcd0fc"/><polygon points="9.6,13.6 9.3,15.3 8.0,15.1 7.2,16.1 7.5,17.3 5.8,17.9 5.3,16.7 4.1,16.4 3.2,17.3 1.9,16.2 2.6,15.2 2.2,14.0 1.0,13.6 1.3,11.9 2.6,12.1 3.4,11.1 3.1,9.9 4.8,9.3 5.3,10.5 6.5,10.8 7.5,9.9 8.7,11.0 8.0,12.0 8.4,13.2" fill="#ecd83c" stroke="#b4a018" stroke-width=".6" stroke-linejoin="round"/><circle cx="5.3" cy="13.6" r="1.3" fill="#c8a828"/></svg><div class="ti" style="left:73px;top:465px">Layer Clean Process</div><div class="dh" style="left:46px;top:493px;width:6px"></div><div class="ex p" style="left:37px;top:489px"></div><svg class="a" style="left:51px;top:483px" width="18" height="18" viewBox="0 0 18 18"><polygon points="6.4,5.5 6.2,6.5 5.4,6.4 4.9,7.0 5.1,7.8 4.1,8.1 3.8,7.4 3.1,7.2 2.5,7.8 1.7,7.1 2.2,6.4 1.9,5.7 1.2,5.5 1.4,4.5 2.2,4.6 2.7,4.0 2.5,3.2 3.5,2.9 3.8,3.6 4.5,3.8 5.1,3.2 5.9,3.9 5.4,4.6 5.7,5.3" fill="#e4e4e8" stroke="#c8c8d0" stroke-width=".6" stroke-linejoin="round"/><circle cx="3.8" cy="5.5" r="0.8" fill="#f4f4f4"/><polygon points="16.8,13.8 16.5,15.2 15.5,15.1 14.8,15.8 15.1,16.8 13.7,17.3 13.3,16.3 12.3,16.1 11.6,16.8 10.5,15.9 11.1,15.1 10.8,14.1 9.8,13.8 10.1,12.4 11.1,12.5 11.8,11.8 11.5,10.8 12.9,10.3 13.3,11.3 14.3,11.5 15.1,10.8 16.1,11.7 15.5,12.5 15.8,13.5" fill="#3cb444" stroke="#1c8424" stroke-width=".6" stroke-linejoin="round"/><circle cx="13.3" cy="13.8" r="1.1" fill="#b4e8b4"/><polygon points="14.8,6.3 14.4,8.2 13.0,8.0 12.1,9.1 12.4,10.5 10.6,11.1 10.0,9.8 8.6,9.5 7.6,10.5 6.2,9.2 7.0,8.0 6.6,6.7 5.2,6.3 5.6,4.4 7.0,4.6 7.9,3.5 7.6,2.1 9.4,1.5 10.0,2.8 11.4,3.1 12.4,2.1 13.8,3.4 13.0,4.6 13.4,5.9" fill="#4c80f0" stroke="#2c58cc" stroke-width=".6" stroke-linejoin="round"/><circle cx="10.0" cy="6.3" r="1.4" fill="#bcd0fc"/><polygon points="9.6,13.6 9.3,15.3 8.0,15.1 7.2,16.1 7.5,17.3 5.8,17.9 5.3,16.7 4.1,16.4 3.2,17.3 1.9,16.2 2.6,15.2 2.2,14.0 1.0,13.6 1.3,11.9 2.6,12.1 3.4,11.1 3.1,9.9 4.8,9.3 5.3,10.5 6.5,10.8 7.5,9.9 8.7,11.0 8.0,12.0 8.4,13.2" fill="#ecd83c" stroke="#b4a018" stroke-width=".6" stroke-linejoin="round"/><circle cx="5.3" cy="13.6" r="1.3" fill="#c8a828"/></svg><div class="ti" style="left:73px;top:483px">Quality Assurance</div><div class="dh" style="left:46px;top:511px;width:6px"></div><div class="ex p" style="left:37px;top:507px"></div><svg class="a" style="left:51px;top:501px" width="18" height="18" viewBox="0 0 18 18"><polygon points="6.4,5.5 6.2,6.5 5.4,6.4 4.9,7.0 5.1,7.8 4.1,8.1 3.8,7.4 3.1,7.2 2.5,7.8 1.7,7.1 2.2,6.4 1.9,5.7 1.2,5.5 1.4,4.5 2.2,4.6 2.7,4.0 2.5,3.2 3.5,2.9 3.8,3.6 4.5,3.8 5.1,3.2 5.9,3.9 5.4,4.6 5.7,5.3" fill="#e4e4e8" stroke="#c8c8d0" stroke-width=".6" stroke-linejoin="round"/><circle cx="3.8" cy="5.5" r="0.8" fill="#f4f4f4"/><polygon points="16.8,13.8 16.5,15.2 15.5,15.1 14.8,15.8 15.1,16.8 13.7,17.3 13.3,16.3 12.3,16.1 11.6,16.8 10.5,15.9 11.1,15.1 10.8,14.1 9.8,13.8 10.1,12.4 11.1,12.5 11.8,11.8 11.5,10.8 12.9,10.3 13.3,11.3 14.3,11.5 15.1,10.8 16.1,11.7 15.5,12.5 15.8,13.5" fill="#3cb444" stroke="#1c8424" stroke-width=".6" stroke-linejoin="round"/><circle cx="13.3" cy="13.8" r="1.1" fill="#b4e8b4"/><polygon points="14.8,6.3 14.4,8.2 13.0,8.0 12.1,9.1 12.4,10.5 10.6,11.1 10.0,9.8 8.6,9.5 7.6,10.5 6.2,9.2 7.0,8.0 6.6,6.7 5.2,6.3 5.6,4.4 7.0,4.6 7.9,3.5 7.6,2.1 9.4,1.5 10.0,2.8 11.4,3.1 12.4,2.1 13.8,3.4 13.0,4.6 13.4,5.9" fill="#4c80f0" stroke="#2c58cc" stroke-width=".6" stroke-linejoin="round"/><circle cx="10.0" cy="6.3" r="1.4" fill="#bcd0fc"/><polygon points="9.6,13.6 9.3,15.3 8.0,15.1 7.2,16.1 7.5,17.3 5.8,17.9 5.3,16.7 4.1,16.4 3.2,17.3 1.9,16.2 2.6,15.2 2.2,14.0 1.0,13.6 1.3,11.9 2.6,12.1 3.4,11.1 3.1,9.9 4.8,9.3 5.3,10.5 6.5,10.8 7.5,9.9 8.7,11.0 8.0,12.0 8.4,13.2" fill="#ecd83c" stroke="#b4a018" stroke-width=".6" stroke-linejoin="round"/><circle cx="5.3" cy="13.6" r="1.3" fill="#c8a828"/></svg><div class="ti" style="left:73px;top:501px">TDR - 00 Master</div><div class="dh" style="left:46px;top:529px;width:6px"></div><div class="ex p" style="left:37px;top:525px"></div><svg class="a" style="left:51px;top:519px" width="18" height="18" viewBox="0 0 18 18"><polygon points="6.4,5.5 6.2,6.5 5.4,6.4 4.9,7.0 5.1,7.8 4.1,8.1 3.8,7.4 3.1,7.2 2.5,7.8 1.7,7.1 2.2,6.4 1.9,5.7 1.2,5.5 1.4,4.5 2.2,4.6 2.7,4.0 2.5,3.2 3.5,2.9 3.8,3.6 4.5,3.8 5.1,3.2 5.9,3.9 5.4,4.6 5.7,5.3" fill="#e4e4e8" stroke="#c8c8d0" stroke-width=".6" stroke-linejoin="round"/><circle cx="3.8" cy="5.5" r="0.8" fill="#f4f4f4"/><polygon points="16.8,13.8 16.5,15.2 15.5,15.1 14.8,15.8 15.1,16.8 13.7,17.3 13.3,16.3 12.3,16.1 11.6,16.8 10.5,15.9 11.1,15.1 10.8,14.1 9.8,13.8 10.1,12.4 11.1,12.5 11.8,11.8 11.5,10.8 12.9,10.3 13.3,11.3 14.3,11.5 15.1,10.8 16.1,11.7 15.5,12.5 15.8,13.5" fill="#3cb444" stroke="#1c8424" stroke-width=".6" stroke-linejoin="round"/><circle cx="13.3" cy="13.8" r="1.1" fill="#b4e8b4"/><polygon points="14.8,6.3 14.4,8.2 13.0,8.0 12.1,9.1 12.4,10.5 10.6,11.1 10.0,9.8 8.6,9.5 7.6,10.5 6.2,9.2 7.0,8.0 6.6,6.7 5.2,6.3 5.6,4.4 7.0,4.6 7.9,3.5 7.6,2.1 9.4,1.5 10.0,2.8 11.4,3.1 12.4,2.1 13.8,3.4 13.0,4.6 13.4,5.9" fill="#4c80f0" stroke="#2c58cc" stroke-width=".6" stroke-linejoin="round"/><circle cx="10.0" cy="6.3" r="1.4" fill="#bcd0fc"/><polygon points="9.6,13.6 9.3,15.3 8.0,15.1 7.2,16.1 7.5,17.3 5.8,17.9 5.3,16.7 4.1,16.4 3.2,17.3 1.9,16.2 2.6,15.2 2.2,14.0 1.0,13.6 1.3,11.9 2.6,12.1 3.4,11.1 3.1,9.9 4.8,9.3 5.3,10.5 6.5,10.8 7.5,9.9 8.7,11.0 8.0,12.0 8.4,13.2" fill="#ecd83c" stroke="#b4a018" stroke-width=".6" stroke-linejoin="round"/><circle cx="5.3" cy="13.6" r="1.3" fill="#c8a828"/></svg><div class="ti" style="left:73px;top:519px">TDR - 85N</div><div class="dh" style="left:46px;top:547px;width:6px"></div><div class="ex p" style="left:37px;top:543px"></div><svg class="a" style="left:51px;top:537px" width="18" height="18" viewBox="0 0 18 18"><polygon points="6.4,5.5 6.2,6.5 5.4,6.4 4.9,7.0 5.1,7.8 4.1,8.1 3.8,7.4 3.1,7.2 2.5,7.8 1.7,7.1 2.2,6.4 1.9,5.7 1.2,5.5 1.4,4.5 2.2,4.6 2.7,4.0 2.5,3.2 3.5,2.9 3.8,3.6 4.5,3.8 5.1,3.2 5.9,3.9 5.4,4.6 5.7,5.3" fill="#e4e4e8" stroke="#c8c8d0" stroke-width=".6" stroke-linejoin="round"/><circle cx="3.8" cy="5.5" r="0.8" fill="#f4f4f4"/><polygon points="16.8,13.8 16.5,15.2 15.5,15.1 14.8,15.8 15.1,16.8 13.7,17.3 13.3,16.3 12.3,16.1 11.6,16.8 10.5,15.9 11.1,15.1 10.8,14.1 9.8,13.8 10.1,12.4 11.1,12.5 11.8,11.8 11.5,10.8 12.9,10.3 13.3,11.3 14.3,11.5 15.1,10.8 16.1,11.7 15.5,12.5 15.8,13.5" fill="#3cb444" stroke="#1c8424" stroke-width=".6" stroke-linejoin="round"/><circle cx="13.3" cy="13.8" r="1.1" fill="#b4e8b4"/><polygon points="14.8,6.3 14.4,8.2 13.0,8.0 12.1,9.1 12.4,10.5 10.6,11.1 10.0,9.8 8.6,9.5 7.6,10.5 6.2,9.2 7.0,8.0 6.6,6.7 5.2,6.3 5.6,4.4 7.0,4.6 7.9,3.5 7.6,2.1 9.4,1.5 10.0,2.8 11.4,3.1 12.4,2.1 13.8,3.4 13.0,4.6 13.4,5.9" fill="#4c80f0" stroke="#2c58cc" stroke-width=".6" stroke-linejoin="round"/><circle cx="10.0" cy="6.3" r="1.4" fill="#bcd0fc"/><polygon points="9.6,13.6 9.3,15.3 8.0,15.1 7.2,16.1 7.5,17.3 5.8,17.9 5.3,16.7 4.1,16.4 3.2,17.3 1.9,16.2 2.6,15.2 2.2,14.0 1.0,13.6 1.3,11.9 2.6,12.1 3.4,11.1 3.1,9.9 4.8,9.3 5.3,10.5 6.5,10.8 7.5,9.9 8.7,11.0 8.0,12.0 8.4,13.2" fill="#ecd83c" stroke="#b4a018" stroke-width=".6" stroke-linejoin="round"/><circle cx="5.3" cy="13.6" r="1.3" fill="#c8a828"/></svg><div class="ti" style="left:73px;top:537px">TDR - CE</div><div class="dh" style="left:46px;top:565px;width:6px"></div><div class="ex p" style="left:37px;top:561px"></div><svg class="a" style="left:51px;top:555px" width="18" height="18" viewBox="0 0 18 18"><polygon points="6.4,5.5 6.2,6.5 5.4,6.4 4.9,7.0 5.1,7.8 4.1,8.1 3.8,7.4 3.1,7.2 2.5,7.8 1.7,7.1 2.2,6.4 1.9,5.7 1.2,5.5 1.4,4.5 2.2,4.6 2.7,4.0 2.5,3.2 3.5,2.9 3.8,3.6 4.5,3.8 5.1,3.2 5.9,3.9 5.4,4.6 5.7,5.3" fill="#e4e4e8" stroke="#c8c8d0" stroke-width=".6" stroke-linejoin="round"/><circle cx="3.8" cy="5.5" r="0.8" fill="#f4f4f4"/><polygon points="16.8,13.8 16.5,15.2 15.5,15.1 14.8,15.8 15.1,16.8 13.7,17.3 13.3,16.3 12.3,16.1 11.6,16.8 10.5,15.9 11.1,15.1 10.8,14.1 9.8,13.8 10.1,12.4 11.1,12.5 11.8,11.8 11.5,10.8 12.9,10.3 13.3,11.3 14.3,11.5 15.1,10.8 16.1,11.7 15.5,12.5 15.8,13.5" fill="#3cb444" stroke="#1c8424" stroke-width=".6" stroke-linejoin="round"/><circle cx="13.3" cy="13.8" r="1.1" fill="#b4e8b4"/><polygon points="14.8,6.3 14.4,8.2 13.0,8.0 12.1,9.1 12.4,10.5 10.6,11.1 10.0,9.8 8.6,9.5 7.6,10.5 6.2,9.2 7.0,8.0 6.6,6.7 5.2,6.3 5.6,4.4 7.0,4.6 7.9,3.5 7.6,2.1 9.4,1.5 10.0,2.8 11.4,3.1 12.4,2.1 13.8,3.4 13.0,4.6 13.4,5.9" fill="#4c80f0" stroke="#2c58cc" stroke-width=".6" stroke-linejoin="round"/><circle cx="10.0" cy="6.3" r="1.4" fill="#bcd0fc"/><polygon points="9.6,13.6 9.3,15.3 8.0,15.1 7.2,16.1 7.5,17.3 5.8,17.9 5.3,16.7 4.1,16.4 3.2,17.3 1.9,16.2 2.6,15.2 2.2,14.0 1.0,13.6 1.3,11.9 2.6,12.1 3.4,11.1 3.1,9.9 4.8,9.3 5.3,10.5 6.5,10.8 7.5,9.9 8.7,11.0 8.0,12.0 8.4,13.2" fill="#ecd83c" stroke="#b4a018" stroke-width=".6" stroke-linejoin="round"/><circle cx="5.3" cy="13.6" r="1.3" fill="#c8a828"/></svg><div class="ti" style="left:73px;top:555px">TDR - FR4</div><div class="dh" style="left:46px;top:583px;width:6px"></div><div class="ex p" style="left:37px;top:579px"></div><svg class="a" style="left:51px;top:573px" width="18" height="18" viewBox="0 0 18 18"><polygon points="6.4,5.5 6.2,6.5 5.4,6.4 4.9,7.0 5.1,7.8 4.1,8.1 3.8,7.4 3.1,7.2 2.5,7.8 1.7,7.1 2.2,6.4 1.9,5.7 1.2,5.5 1.4,4.5 2.2,4.6 2.7,4.0 2.5,3.2 3.5,2.9 3.8,3.6 4.5,3.8 5.1,3.2 5.9,3.9 5.4,4.6 5.7,5.3" fill="#e4e4e8" stroke="#c8c8d0" stroke-width=".6" stroke-linejoin="round"/><circle cx="3.8" cy="5.5" r="0.8" fill="#f4f4f4"/><polygon points="16.8,13.8 16.5,15.2 15.5,15.1 14.8,15.8 15.1,16.8 13.7,17.3 13.3,16.3 12.3,16.1 11.6,16.8 10.5,15.9 11.1,15.1 10.8,14.1 9.8,13.8 10.1,12.4 11.1,12.5 11.8,11.8 11.5,10.8 12.9,10.3 13.3,11.3 14.3,11.5 15.1,10.8 16.1,11.7 15.5,12.5 15.8,13.5" fill="#3cb444" stroke="#1c8424" stroke-width=".6" stroke-linejoin="round"/><circle cx="13.3" cy="13.8" r="1.1" fill="#b4e8b4"/><polygon points="14.8,6.3 14.4,8.2 13.0,8.0 12.1,9.1 12.4,10.5 10.6,11.1 10.0,9.8 8.6,9.5 7.6,10.5 6.2,9.2 7.0,8.0 6.6,6.7 5.2,6.3 5.6,4.4 7.0,4.6 7.9,3.5 7.6,2.1 9.4,1.5 10.0,2.8 11.4,3.1 12.4,2.1 13.8,3.4 13.0,4.6 13.4,5.9" fill="#4c80f0" stroke="#2c58cc" stroke-width=".6" stroke-linejoin="round"/><circle cx="10.0" cy="6.3" r="1.4" fill="#bcd0fc"/><polygon points="9.6,13.6 9.3,15.3 8.0,15.1 7.2,16.1 7.5,17.3 5.8,17.9 5.3,16.7 4.1,16.4 3.2,17.3 1.9,16.2 2.6,15.2 2.2,14.0 1.0,13.6 1.3,11.9 2.6,12.1 3.4,11.1 3.1,9.9 4.8,9.3 5.3,10.5 6.5,10.8 7.5,9.9 8.7,11.0 8.0,12.0 8.4,13.2" fill="#ecd83c" stroke="#b4a018" stroke-width=".6" stroke-linejoin="round"/><circle cx="5.3" cy="13.6" r="1.3" fill="#c8a828"/></svg><div class="ti" style="left:73px;top:573px">TDR - NELEP</div><div class="dh" style="left:46px;top:601px;width:6px"></div><div class="ex p" style="left:37px;top:597px"></div><svg class="a" style="left:51px;top:591px" width="18" height="18" viewBox="0 0 18 18"><polygon points="6.4,5.5 6.2,6.5 5.4,6.4 4.9,7.0 5.1,7.8 4.1,8.1 3.8,7.4 3.1,7.2 2.5,7.8 1.7,7.1 2.2,6.4 1.9,5.7 1.2,5.5 1.4,4.5 2.2,4.6 2.7,4.0 2.5,3.2 3.5,2.9 3.8,3.6 4.5,3.8 5.1,3.2 5.9,3.9 5.4,4.6 5.7,5.3" fill="#e4e4e8" stroke="#c8c8d0" stroke-width=".6" stroke-linejoin="round"/><circle cx="3.8" cy="5.5" r="0.8" fill="#f4f4f4"/><polygon points="16.8,13.8 16.5,15.2 15.5,15.1 14.8,15.8 15.1,16.8 13.7,17.3 13.3,16.3 12.3,16.1 11.6,16.8 10.5,15.9 11.1,15.1 10.8,14.1 9.8,13.8 10.1,12.4 11.1,12.5 11.8,11.8 11.5,10.8 12.9,10.3 13.3,11.3 14.3,11.5 15.1,10.8 16.1,11.7 15.5,12.5 15.8,13.5" fill="#3cb444" stroke="#1c8424" stroke-width=".6" stroke-linejoin="round"/><circle cx="13.3" cy="13.8" r="1.1" fill="#b4e8b4"/><polygon points="14.8,6.3 14.4,8.2 13.0,8.0 12.1,9.1 12.4,10.5 10.6,11.1 10.0,9.8 8.6,9.5 7.6,10.5 6.2,9.2 7.0,8.0 6.6,6.7 5.2,6.3 5.6,4.4 7.0,4.6 7.9,3.5 7.6,2.1 9.4,1.5 10.0,2.8 11.4,3.1 12.4,2.1 13.8,3.4 13.0,4.6 13.4,5.9" fill="#4c80f0" stroke="#2c58cc" stroke-width=".6" stroke-linejoin="round"/><circle cx="10.0" cy="6.3" r="1.4" fill="#bcd0fc"/><polygon points="9.6,13.6 9.3,15.3 8.0,15.1 7.2,16.1 7.5,17.3 5.8,17.9 5.3,16.7 4.1,16.4 3.2,17.3 1.9,16.2 2.6,15.2 2.2,14.0 1.0,13.6 1.3,11.9 2.6,12.1 3.4,11.1 3.1,9.9 4.8,9.3 5.3,10.5 6.5,10.8 7.5,9.9 8.7,11.0 8.0,12.0 8.4,13.2" fill="#ecd83c" stroke="#b4a018" stroke-width=".6" stroke-linejoin="round"/><circle cx="5.3" cy="13.6" r="1.3" fill="#c8a828"/></svg><div class="ti" style="left:73px;top:591px">TDR - NELSI</div></div></div>
<!-- back arrow -->
<div class="sb" style="left:296px;top:98px;width:21px;height:21px"><svg class="a" style="left:-1px;top:-1px" width="21" height="21" viewBox="0 0 21 21"><path d="M3.900 9.800L14.300 4L9.900 9.800z" fill="#d0d0d0"/><path d="M14.300 4L9.900 9.800L14.700 15.400z" fill="#808080"/><path d="M3.900 9.800h6L14.700 15.400v.8h-1.500L3.900 10.800z" fill="#000"/></svg></div>
<div class="t" style="left:1043px;top:98px;font-size:14px;letter-spacing:0;font-weight:bold;font-style:italic;line-height:16px;height:16px" id="invrep">Inventory Reports</div>
<div class="t" style="left:366px;top:126px">View</div>
<div class="sunk" style="left:395px;top:122px;width:166px;height:22px"></div>
<div class="t" style="left:399px;top:127px">Lot Balance</div>
<div class="sb" style="left:543px;top:124px;width:16px;height:18px"><svg class="a" style="left:0;top:0" width="14" height="16"><path d="M3.500 6.500h7l-3.500 4z" fill="#000"/></svg></div>
<div class="t" style="left:637px;top:126px">Type</div>
<div class="sunk" style="left:667px;top:122px;width:124px;height:22px"></div>
<div class="t" style="left:671px;top:127px">All lots</div>
<div class="sb" style="left:773px;top:124px;width:16px;height:18px"><svg class="a" style="left:0;top:0" width="14" height="16"><path d="M3.500 6.500h7l-3.500 4z" fill="#000"/></svg></div>
<!-- grid box -->
<div class="a" style="left:299px;top:150px;width:865px;height:567px;background:#a0a0a0;border-top:1px solid #a0a0a0;border-left:1px solid #a0a0a0;border-right:1px solid #fff;border-bottom:1px solid #fff"></div>
<div class="a" style="left:300px;top:151px;width:863px;height:565px;border-top:1px solid #696969;border-left:1px solid #696969;border-right:1px solid #f6f6f6;border-bottom:1px solid #f6f6f6"></div>
<div class="a" style="left:301px;top:152px;width:861px;height:32px;background:#a0a0a0"></div>
<div class="t" style="left:306px;top:164px;color:#e4e4e4">Drag column headers here to group by</div>
<div class="sb" style="left:980px;top:153px;width:29px;height:29px"><svg class="a" style="left:-1px;top:-1px" width="29" height="29" viewBox="0 0 29 29"><path d="M3 1.500h13.500l9 9v12l-22 3z" fill="#ececec"/><path d="M3 1.500h13.500l9 9" fill="none" stroke="#d4d4d4" stroke-width=".8"/><path d="M4.500 8.500h9.500v7.500h-9.500z" fill="#dcdcdc"/><path d="M3.500 17l22-1.500v7l-22 3z" fill="#fafafa"/><path d="M3.500 25.500l22-3" stroke="#6c6c6c" stroke-width="1.400"/><path d="M4 17.500l7-.5" stroke="#b0b0b0" stroke-width=".8"/><path d="M9.800 17.500l1.700-4.200l12.500-10.300l2.600 3.200l-12.500 10.300z" fill="#f0a422" stroke="#c88418" stroke-width=".5"/><path d="M12 14.500l12.500-10.300" stroke="#f8d088" stroke-width=".9"/><path d="M22 4.600l2-1.600l2.600 3.200l-2 1.600z" fill="#d0d0d0"/><path d="M24 3l1.500-1.200c1-.8 3.300 2 2.400 2.900l-1.300 1.500z" fill="#f08890"/><path d="M9.800 17.500l1.700-4.200l2.600 3.200z" fill="#f0dcc0"/><path d="M9.800 17.500l.7-1.700l1 1.200z" fill="#444"/></svg></div>
<div class="sb" style="left:1017px;top:153px;width:29px;height:29px"><svg class="a" style="left:-1px;top:-1px" width="29" height="29" viewBox="0 0 29 29"><rect x="4.5" y="4.500" width="7.500" height="13" fill="#8a8a8a" stroke="#000" stroke-width="1"/><rect x="5.5" y="7" width="2" height="10" fill="#c8c8c8"/><path d="M5.5 5.500h5.500" stroke="#e8e8e8" stroke-width=".8"/><path d="M5.0 6.500h6.500" stroke="#000" stroke-width=".8"/><rect x="16.5" y="4.500" width="7.500" height="13" fill="#8a8a8a" stroke="#000" stroke-width="1"/><rect x="17.5" y="7" width="2" height="10" fill="#c8c8c8"/><path d="M17.5 5.500h5.500" stroke="#e8e8e8" stroke-width=".8"/><path d="M17.0 6.500h6.500" stroke="#000" stroke-width=".8"/><rect x="10.500" y="11.500" width="7.500" height="5" fill="#000"/><path d="M12 12.800h4.500M11.500 14.800h5.500" stroke="#d0d0d0" stroke-width=".8"/><path d="M6.0 18h7.500v2h-1.500v2.200h1.500v1.800h-6.500v-1.800h1.500v-2.200h-2.500z" fill="#000"/><path d="M7.5 19h3.500M9.0 21.200h1.800M8.0 23h3.500" stroke="#d0d0d0" stroke-width=".7"/><path d="M15.0 18h7.500v2h-1.500v2.200h1.500v1.800h-6.500v-1.800h1.500v-2.200h-2.500z" fill="#000"/><path d="M16.5 19h3.500M18.0 21.200h1.800M17.0 23h3.500" stroke="#d0d0d0" stroke-width=".7"/></svg></div>
<div class="sb" style="left:1046px;top:153px;width:29px;height:29px"><svg class="a" style="left:-1px;top:-1px" width="29" height="29" viewBox="0 0 29 29"><rect x="5" y="6" width="18.700" height="6.800" fill="#000"/><rect x="5" y="6" width="17.700" height="5.800" fill="#8c8c8c"/><path d="M5 6h17.700" stroke="#b8b8b8" stroke-width="1"/><text x="6.500" y="11.300" font-family="Liberation Sans" font-weight="bold" font-size="6.500" fill="#fff" letter-spacing="0" textLength="15">Title</text><path d="M5 14v11.500M23.900 14v11.500" stroke="#e02020" stroke-width="1" stroke-dasharray="1 1"/><path d="M6.500 19.300l4-3.600v2.700h8v-2.700l4 3.600l-4 3.600v-2.700h-8v2.700z" fill="#18982c" stroke="#0c7018" stroke-width=".4"/></svg></div>
<div class="sb" style="left:1075px;top:153px;width:28px;height:29px"><svg class="a" style="left:-1px;top:-1px" width="29" height="29" viewBox="0 0 29 29"><path d="M11.200 6.200h3.700v5h4.600v3.500h-4.600v4.800h-3.700v-4.800h-5v-3.500h5z" transform="translate(7.0,7.0)" fill="#000"/><path d="M11.200 6.200h3.700v5h4.600v3.500h-4.600v4.800h-3.700v-4.800h-5v-3.500h5z" transform="translate(6.0,6.0)" fill="#fff"/><path d="M11.200 6.200h3.700v5h4.600v3.500h-4.600v4.800h-3.700v-4.800h-5v-3.500h5z" transform="translate(5.0,5.0)" fill="#000"/><path d="M11.200 6.200h3.700v5h4.600v3.500h-4.600v4.800h-3.700v-4.800h-5v-3.500h5z" transform="translate(4.0,4.0)" fill="#fff"/><path d="M11.200 6.200h3.700v5h4.600v3.500h-4.600v4.800h-3.700v-4.800h-5v-3.500h5z" transform="translate(3.0,3.0)" fill="#000"/><path d="M11.200 6.200h3.700v5h4.600v3.500h-4.600v4.800h-3.700v-4.800h-5v-3.500h5z" transform="translate(2.0,2.0)" fill="#fff"/><path d="M11.200 6.200h3.700v5h4.600v3.500h-4.600v4.800h-3.700v-4.800h-5v-3.500h5z" transform="translate(.7,.7)" fill="#10104c"/><path d="M11.200 6.200h3.700v5h4.600v3.500h-4.600v4.800h-3.700v-4.800h-5v-3.500h5z" fill="#8484d4"/><path d="M12 7v11.500M7 12h11.500" stroke="#b4b4ec" stroke-width="1"/></svg></div>
<div class="sb" style="left:1103px;top:153px;width:29px;height:29px"><svg class="a" style="left:-1px;top:-1px" width="29" height="29" viewBox="0 0 29 29"><rect x="10.3" y="16.2" width="13.600" height="3.300" fill="#000"/><rect x="9.5" y="15.4" width="13.600" height="2.500" fill="#fff"/><rect x="8.1" y="13.5" width="13.600" height="3.300" fill="#000"/><rect x="7.3" y="12.7" width="13.600" height="2.500" fill="#fff"/><rect x="5.100" y="10" width="13.600" height="3.500" fill="#0c3478"/><rect x="5.100" y="10" width="13.200" height="2.700" fill="#2470cc"/><path d="M5.500 10.400h12.500" stroke="#4c94e4" stroke-width=".8"/></svg></div>
<div class="sb" style="left:1132px;top:153px;width:29px;height:29px"><svg class="a" style="left:-1px;top:-1px" width="29" height="29" viewBox="0 0 29 29"><path d="M6 2.500c-2.500 1-3.500 3.500-3 6c.5 2 1.700 3 3 3.800v9c-1.300.8-1.500 2.300-1 3.500c.7 1.300 2 1.700 3.500 1.700s3-.8 3.300-2.500c.2-1.200-.4-2.200-1.300-2.800v-9c1.500-.6 3-2.200 3-4.700c0-2-1-4-3.500-5v5.500h-4z" fill="#dedede" stroke="#b4b4b4" stroke-width=".8"/><ellipse cx="8.500" cy="22.700" rx="1.200" ry="1.500" fill="#f4f4f4" stroke="#b0b0b0" stroke-width=".5"/><rect x="16.300" y="2.200" width="8.600" height="12.800" rx="3" fill="url(#gScrew)" stroke="#d08838" stroke-width=".8"/><rect x="19.400" y="15" width="2.300" height="4.500" fill="#e0e0e0" stroke="#c4c4c4" stroke-width=".4"/><path d="M18.500 19.500h4l1.300 2l-.8 1.500v2.500h-5v-2.500l-.8-1.500z" fill="#e8e8e8" stroke="#c0c0c0" stroke-width=".6"/><defs><linearGradient id="gScrew" x1="0" y1="0" x2="0" y2="1"><stop offset="0" stop-color="#fde4bc"/><stop offset=".4" stop-color="#f8b850"/><stop offset=".5" stop-color="#f09010"/><stop offset="1" stop-color="#fcd090"/></linearGradient></defs></svg></div>
<div class="a" style="left:302px;top:184px;width:843px;height:21px;background:#f0f0f0"></div><div class="hc" style="left:302px;width:101px; padding-right:13px">Lot Label</div><svg class="a" style="left:390px;top:192px" width="10" height="10"><path d="M1 8.500l4-7" stroke="#a8a8a8" fill="none"/><path d="M5 1.500l4 7h-8" stroke="#fff" fill="none"/></svg><div class="hc" style="left:403px;width:223px; padding-right:1px">Chemical</div><div class="hc" style="left:626px;width:75px; padding-right:1px">Unit</div><div class="hc" style="left:701px;width:115px; padding-right:13px">Received Date</div><svg class="a" style="left:803px;top:192px" width="10" height="10"><path d="M1 8.500l4-7" stroke="#a8a8a8" fill="none"/><path d="M5 1.500l4 7h-8" stroke="#fff" fill="none"/></svg><div class="hc" style="left:816px;width:91px; padding-right:1px">Qty Received</div><div class="hc" style="left:907px;width:84px; padding-right:1px">Qty balance</div><div class="hc" style="left:991px;width:153px; padding-right:1px">Location</div><div class="a" style="left:302px;top:205px;width:843px;height:467px;background:#fff;overflow:hidden"><div class="a" style="left:-302px;top:-205px;width:1178px;height:754px"><div class="row sel" style="top:205px"><div class="c" style="left:0px;width:101px;padding-left:2.5px;">009-01-01-001</div><div class="c" style="left:101px;width:223px;padding-left:2.5px;">ABC</div><div class="c" style="left:324px;width:75px;padding-left:2.5px;">pound</div><div class="c" style="left:399px;width:115px;text-align:center;padding-right:2px;">4/9/2009</div><div class="c" style="left:514px;width:91px;text-align:right;padding-right:3px;">500</div><div class="c" style="left:605px;width:84px;text-align:right;padding-right:3px;">0</div><div class="c" style="left:689px;width:153px;padding-left:2.5px;">Lab Cabinet #10</div></div>
<div class="row " style="top:226px"><div class="c" style="left:0px;width:101px;padding-left:2.5px;">014-05-05-001</div><div class="c" style="left:101px;width:223px;padding-left:2.5px;">Copper 328 A</div><div class="c" style="left:324px;width:75px;padding-left:2.5px;">gallon</div><div class="c" style="left:399px;width:115px;text-align:center;padding-right:2px;">5/16/2009</div><div class="c" style="left:514px;width:91px;text-align:right;padding-right:3px;">15</div><div class="c" style="left:605px;width:84px;text-align:right;padding-right:3px;">15</div><div class="c" style="left:689px;width:153px;padding-left:2.5px;">Hallway Storage Bin #34</div></div>
<div class="row " style="top:247px"><div class="c" style="left:0px;width:101px;padding-left:2.5px;">015-05-05-001</div><div class="c" style="left:101px;width:223px;padding-left:2.5px;">Copper 328 L</div><div class="c" style="left:324px;width:75px;padding-left:2.5px;">gallon</div><div class="c" style="left:399px;width:115px;text-align:center;padding-right:2px;">6/2/2009</div><div class="c" style="left:514px;width:91px;text-align:right;padding-right:3px;">15</div><div class="c" style="left:605px;width:84px;text-align:right;padding-right:3px;">15</div><div class="c" style="left:689px;width:153px;padding-left:2.5px;">Warehouse #49</div></div>
<div class="row o" style="top:268px"><div class="c" style="left:0px;width:101px;padding-left:2.5px;">032-02-04-001</div><div class="c" style="left:101px;width:223px;padding-left:2.5px;">Copper Sulfate</div><div class="c" style="left:324px;width:75px;padding-left:2.5px;">gallon</div><div class="c" style="left:399px;width:115px;text-align:center;padding-right:2px;">6/24/2009</div><div class="c" style="left:514px;width:91px;text-align:right;padding-right:3px;">50</div><div class="c" style="left:605px;width:84px;text-align:right;padding-right:3px;">0</div><div class="c" style="left:689px;width:153px;padding-left:2.5px;">Hallway Storage Bin #34</div></div>
<div class="row o" style="top:289px"><div class="c" style="left:0px;width:101px;padding-left:2.5px;">003-05-03-001</div><div class="c" style="left:101px;width:223px;padding-left:2.5px;">Cuposit Z</div><div class="c" style="left:324px;width:75px;padding-left:2.5px;">liter</div><div class="c" style="left:399px;width:115px;text-align:center;padding-right:2px;">7/24/2009</div><div class="c" style="left:514px;width:91px;text-align:right;padding-right:3px;">473.17</div><div class="c" style="left:605px;width:84px;text-align:right;padding-right:3px;">0</div><div class="c" style="left:689px;width:153px;padding-left:2.5px;">Lab #4</div></div>
<div class="row o" style="top:310px"><div class="c" style="left:0px;width:101px;padding-left:2.5px;">017-03-03-001</div><div class="c" style="left:101px;width:223px;padding-left:2.5px;">Cuposit Y</div><div class="c" style="left:324px;width:75px;padding-left:2.5px;">gallon</div><div class="c" style="left:399px;width:115px;text-align:center;padding-right:2px;">8/15/2009</div><div class="c" style="left:514px;width:91px;text-align:right;padding-right:3px;">125</div><div class="c" style="left:605px;width:84px;text-align:right;padding-right:3px;">0</div><div class="c" style="left:689px;width:153px;padding-left:2.5px;">Lab #4</div></div>
<div class="row r" style="top:331px"><div class="c" style="left:0px;width:101px;padding-left:2.5px;">023-01-04-001</div><div class="c" style="left:101px;width:223px;padding-left:2.5px;">Everon Reducer Concentrate</div><div class="c" style="left:324px;width:75px;padding-left:2.5px;">liter</div><div class="c" style="left:399px;width:115px;text-align:center;padding-right:2px;">9/9/2009</div><div class="c" style="left:514px;width:91px;text-align:right;padding-right:3px;">189.27</div><div class="c" style="left:605px;width:84px;text-align:right;padding-right:3px;">170.77</div><div class="c" style="left:689px;width:153px;padding-left:2.5px;">Warehouse #49</div></div>
<div class="row o" style="top:352px"><div class="c" style="left:0px;width:101px;padding-left:2.5px;">035-04-01-001</div><div class="c" style="left:101px;width:223px;padding-left:2.5px;">Nickel Chloride Concentrate</div><div class="c" style="left:324px;width:75px;padding-left:2.5px;">gallon</div><div class="c" style="left:399px;width:115px;text-align:center;padding-right:2px;">9/26/2009</div><div class="c" style="left:514px;width:91px;text-align:right;padding-right:3px;">75</div><div class="c" style="left:605px;width:84px;text-align:right;padding-right:3px;">0</div><div class="c" style="left:689px;width:153px;padding-left:2.5px;">Lab #4</div></div>
<div class="row o" style="top:373px"><div class="c" style="left:0px;width:101px;padding-left:2.5px;">007-03-02-001</div><div class="c" style="left:101px;width:223px;padding-left:2.5px;">Glass Etch Additive</div><div class="c" style="left:324px;width:75px;padding-left:2.5px;">liter</div><div class="c" style="left:399px;width:115px;text-align:center;padding-right:2px;">9/27/2009</div><div class="c" style="left:514px;width:91px;text-align:right;padding-right:3px;">15</div><div class="c" style="left:605px;width:84px;text-align:right;padding-right:3px;">0</div><div class="c" style="left:689px;width:153px;padding-left:2.5px;">Lab #4</div></div>
<div class="row o" style="top:394px"><div class="c" style="left:0px;width:101px;padding-left:2.5px;">027-05-01-001</div><div class="c" style="left:101px;width:223px;padding-left:2.5px;">SMT Gold Salts</div><div class="c" style="left:324px;width:75px;padding-left:2.5px;">troy ounce</div><div class="c" style="left:399px;width:115px;text-align:center;padding-right:2px;">10/18/2009</div><div class="c" style="left:514px;width:91px;text-align:right;padding-right:3px;">65</div><div class="c" style="left:605px;width:84px;text-align:right;padding-right:3px;">0</div><div class="c" style="left:689px;width:153px;padding-left:2.5px;">Lab Cabinet #10</div></div>
<div class="row r" style="top:415px"><div class="c" style="left:0px;width:101px;padding-left:2.5px;">004-02-02-001</div><div class="c" style="left:101px;width:223px;padding-left:2.5px;">3308 A</div><div class="c" style="left:324px;width:75px;padding-left:2.5px;">gallon</div><div class="c" style="left:399px;width:115px;text-align:center;padding-right:2px;">1/10/2010</div><div class="c" style="left:514px;width:91px;text-align:right;padding-right:3px;">75</div><div class="c" style="left:605px;width:84px;text-align:right;padding-right:3px;">65.5</div><div class="c" style="left:689px;width:153px;padding-left:2.5px;">Lab Cabinet #10</div></div>
<div class="row r" style="top:436px"><div class="c" style="left:0px;width:101px;padding-left:2.5px;">050-04-04-001</div><div class="c" style="left:101px;width:223px;padding-left:2.5px;">XYZ Concentrate</div><div class="c" style="left:324px;width:75px;padding-left:2.5px;">gallon</div><div class="c" style="left:399px;width:115px;text-align:center;padding-right:2px;">1/10/2010</div><div class="c" style="left:514px;width:91px;text-align:right;padding-right:3px;">60</div><div class="c" style="left:605px;width:84px;text-align:right;padding-right:3px;">29.25</div><div class="c" style="left:689px;width:153px;padding-left:2.5px;">Warehouse #49</div></div>
<div class="row r" style="top:457px"><div class="c" style="left:0px;width:101px;padding-left:2.5px;">005-02-02-001</div><div class="c" style="left:101px;width:223px;padding-left:2.5px;">3308 B</div><div class="c" style="left:324px;width:75px;padding-left:2.5px;">gallon</div><div class="c" style="left:399px;width:115px;text-align:center;padding-right:2px;">1/17/2010</div><div class="c" style="left:514px;width:91px;text-align:right;padding-right:3px;">15</div><div class="c" style="left:605px;width:84px;text-align:right;padding-right:3px;">9</div><div class="c" style="left:689px;width:153px;padding-left:2.5px;">Hallway Storage Bin #34</div></div>
<div class="row r" style="top:478px"><div class="c" style="left:0px;width:101px;padding-left:2.5px;">026-05-01-001</div><div class="c" style="left:101px;width:223px;padding-left:2.5px;">SMT Make Up Solution</div><div class="c" style="left:324px;width:75px;padding-left:2.5px;">gallon</div><div class="c" style="left:399px;width:115px;text-align:center;padding-right:2px;">1/19/2010</div><div class="c" style="left:514px;width:91px;text-align:right;padding-right:3px;">150</div><div class="c" style="left:605px;width:84px;text-align:right;padding-right:3px;">150</div><div class="c" style="left:689px;width:153px;padding-left:2.5px;">Lab #4</div></div>
<div class="row " style="top:499px"><div class="c" style="left:0px;width:101px;padding-left:2.5px;">031-01-01-001</div><div class="c" style="left:101px;width:223px;padding-left:2.5px;">Aurolectroless SMT Replenisher</div><div class="c" style="left:324px;width:75px;padding-left:2.5px;">liter</div><div class="c" style="left:399px;width:115px;text-align:center;padding-right:2px;">2/2/2010</div><div class="c" style="left:514px;width:91px;text-align:right;padding-right:3px;">18.92</div><div class="c" style="left:605px;width:84px;text-align:right;padding-right:3px;">16.92</div><div class="c" style="left:689px;width:153px;padding-left:2.5px;">Warehouse Rack #56</div></div>
<div class="row " style="top:520px"><div class="c" style="left:0px;width:101px;padding-left:2.5px;">005-03-03-001</div><div class="c" style="left:101px;width:223px;padding-left:2.5px;">3308 B</div><div class="c" style="left:324px;width:75px;padding-left:2.5px;">gallon</div><div class="c" style="left:399px;width:115px;text-align:center;padding-right:2px;">2/25/2010</div><div class="c" style="left:514px;width:91px;text-align:right;padding-right:3px;">100</div><div class="c" style="left:605px;width:84px;text-align:right;padding-right:3px;">100</div><div class="c" style="left:689px;width:153px;padding-left:2.5px;">Hallway Storage Bin #34</div></div>
<div class="row r" style="top:541px"><div class="c" style="left:0px;width:101px;padding-left:2.5px;">030-03-04-001</div><div class="c" style="left:101px;width:223px;padding-left:2.5px;">Potassium Hydroxide</div><div class="c" style="left:324px;width:75px;padding-left:2.5px;">kilogram</div><div class="c" style="left:399px;width:115px;text-align:center;padding-right:2px;">3/3/2010</div><div class="c" style="left:514px;width:91px;text-align:right;padding-right:3px;">10</div><div class="c" style="left:605px;width:84px;text-align:right;padding-right:3px;">8.38</div><div class="c" style="left:689px;width:153px;padding-left:2.5px;">Lab #4</div></div>
<div class="row " style="top:562px"><div class="c" style="left:0px;width:101px;padding-left:2.5px;">031-01-01-002</div><div class="c" style="left:101px;width:223px;padding-left:2.5px;">Aurolectroless SMT Replenisher</div><div class="c" style="left:324px;width:75px;padding-left:2.5px;">liter</div><div class="c" style="left:399px;width:115px;text-align:center;padding-right:2px;">3/7/2010</div><div class="c" style="left:514px;width:91px;text-align:right;padding-right:3px;">189.27</div><div class="c" style="left:605px;width:84px;text-align:right;padding-right:3px;">189.27</div><div class="c" style="left:689px;width:153px;padding-left:2.5px;">Warehouse Rack #56</div></div>
<div class="row " style="top:583px"><div class="c" style="left:0px;width:101px;padding-left:2.5px;">004-02-02-002</div><div class="c" style="left:101px;width:223px;padding-left:2.5px;">3308 A</div><div class="c" style="left:324px;width:75px;padding-left:2.5px;">gallon</div><div class="c" style="left:399px;width:115px;text-align:center;padding-right:2px;">5/14/2010</div><div class="c" style="left:514px;width:91px;text-align:right;padding-right:3px;">15</div><div class="c" style="left:605px;width:84px;text-align:right;padding-right:3px;">11.75</div><div class="c" style="left:689px;width:153px;padding-left:2.5px;">Lab Cabinet #10</div></div>
<div class="row o" style="top:604px"><div class="c" style="left:0px;width:101px;padding-left:2.5px;">006-02-01-001</div><div class="c" style="left:101px;width:223px;padding-left:2.5px;">3313 Neutralizer</div><div class="c" style="left:324px;width:75px;padding-left:2.5px;">gallon</div><div class="c" style="left:399px;width:115px;text-align:center;padding-right:2px;">6/16/2010</div><div class="c" style="left:514px;width:91px;text-align:right;padding-right:3px;">150</div><div class="c" style="left:605px;width:84px;text-align:right;padding-right:3px;">0</div><div class="c" style="left:689px;width:153px;padding-left:2.5px;">Hallway Storage Bin #34</div></div>
<div class="row r" style="top:625px"><div class="c" style="left:0px;width:101px;padding-left:2.5px;">060-01-05-001</div><div class="c" style="left:101px;width:223px;padding-left:2.5px;">Sodium Thiosulfate</div><div class="c" style="left:324px;width:75px;padding-left:2.5px;">liter</div><div class="c" style="left:399px;width:115px;text-align:center;padding-right:2px;">6/19/2010</div><div class="c" style="left:514px;width:91px;text-align:right;padding-right:3px;">5</div><div class="c" style="left:605px;width:84px;text-align:right;padding-right:3px;">4.61</div><div class="c" style="left:689px;width:153px;padding-left:2.5px;">Hallway Storage Bin #34</div></div>
<div class="row r" style="top:646px"><div class="c" style="left:0px;width:101px;padding-left:2.5px;">046-02-01-001</div><div class="c" style="left:101px;width:223px;padding-left:2.5px;">DX-45</div><div class="c" style="left:324px;width:75px;padding-left:2.5px;">liter</div><div class="c" style="left:399px;width:115px;text-align:center;padding-right:2px;">6/20/2010</div><div class="c" style="left:514px;width:91px;text-align:right;padding-right:3px;">170.34</div><div class="c" style="left:605px;width:84px;text-align:right;padding-right:3px;">96.91</div><div class="c" style="left:689px;width:153px;padding-left:2.5px;">Warehouse Rack #56</div></div>
<div class="row " style="top:667px"><div class="c" style="left:0px;width:101px;padding-left:2.5px;"></div><div class="c" style="left:101px;width:223px;padding-left:2.5px;"></div><div class="c" style="left:324px;width:75px;padding-left:2.5px;"></div><div class="c" style="left:399px;width:115px;text-align:center;padding-right:2px;"></div><div class="c" style="left:514px;width:91px;text-align:right;padding-right:3px;"></div><div class="c" style="left:605px;width:84px;text-align:right;padding-right:3px;"></div><div class="c" style="left:689px;width:153px;padding-left:2.5px;"></div></div>
</div></div><div class="a" style="left:1144px;top:205px;width:3px;height:20px;background:#b4b4b4"></div>
<!-- v scrollbar -->
<div class="a dith" style="left:1147px;top:184px;width:15px;height:488px"></div>
<div class="a" style="left:1147px;top:184px;width:15px;height:17px;background:#f0f0f0"><svg class="a" style="left:0;top:0" width="16" height="17"><path d="M4.500 10.500l3.500-4l3.500 4z" fill="#1a1a1a"/></svg></div>
<div class="sb" style="left:1147px;top:201px;width:15px;height:92px"></div>
<div class="a" style="left:1147px;top:655px;width:15px;height:17px;background:#f0f0f0"><svg class="a" style="left:0;top:0" width="16" height="17"><path d="M4.500 7.500l3.500 4l3.500-4z" fill="#1a1a1a"/></svg></div>
<!-- h scrollbar -->
<div class="a dith" style="left:302px;top:672px;width:844px;height:16px"></div>
<div class="a" style="left:302px;top:672px;width:17px;height:16px;background:#f0f0f0"><svg class="a" style="left:0;top:0" width="17" height="16"><path d="M10.500 4.500l-4 3.500l4 3.500z" fill="#1a1a1a"/></svg></div>
<div class="sb" style="left:319px;top:672px;width:366px;height:16px"></div>
<div class="a" style="left:1129px;top:672px;width:17px;height:16px;background:#f0f0f0"><svg class="a" style="left:0;top:0" width="17" height="16"><path d="M6.500 4.500l4 3.500l-4 3.500z" fill="#1a1a1a"/></svg></div>
<div class="a" style="left:1147px;top:672px;width:15px;height:16px;background:#f0f0f0"></div>
<!-- footer band -->
<div class="a" style="left:301px;top:688px;width:861px;height:1px;background:#696969"></div>
<div class="a" style="left:301px;top:689px;width:861px;height:26px;background:#a0a0a0"></div>
<div class="a" style="left:308px;top:693px;width:126px;height:18px;background:#a0a0a0;border-top:1px solid #696969;border-left:1px solid #696969;border-right:1px solid #fff;border-bottom:1px solid #fff"></div>
<div class="t" style="left:316px;top:695px">109 items displayed</div>
<div class="a" style="left:954px;top:690px;width:206px;height:24px;background:#fff;border:1px solid #606060"></div>
<div class="t" style="left:959px;top:695px">Legend</div>
<div class="a" style="left:1040px;top:692px;width:21px;height:20px;background:#000"></div>
<div class="a" style="left:1063px;top:692px;width:21px;height:20px;background:#ffff00"></div>
<div class="a" style="left:1086px;top:692px;width:21px;height:20px;background:#ff8000"></div>
<div class="a" style="left:1109px;top:692px;width:21px;height:20px;background:#0000ff"></div>
<div class="a" style="left:1132px;top:692px;width:21px;height:20px;background:#ff0000"></div>
<!-- status bar -->
<div class="t" style="left:11px;top:728px;font-size:12px">Logged In</div>
<div class="a" style="left:72px;top:724px;width:77px;height:22px;border-top:1px solid #a0a0a0;border-left:1px solid #a0a0a0;border-right:1px solid #fff"></div>
<div class="t" style="left:74px;top:728px;font-size:12px">Default User.</div>
<div class="t" style="left:746px;top:728px;font-size:12px">Add Slip</div>
<div class="a" style="left:797px;top:724px;width:62px;height:22px;border-top:1px solid #a0a0a0;border-left:1px solid #a0a0a0;border-right:1px solid #fff"></div>
<div class="t" style="left:875px;top:728px;font-size:12px">Schedule</div>
<div class="a" style="left:933px;top:724px;width:62px;height:22px;border-top:1px solid #a0a0a0;border-left:1px solid #a0a0a0;border-right:1px solid #fff"></div>
<div class="t" style="left:1011px;top:728px;font-size:12px;letter-spacing:0">Corrective Action</div>
<div class="a" style="left:1108px;top:724px;width:43px;height:22px;border-top:1px solid #a0a0a0;border-left:1px solid #a0a0a0;border-right:1px solid #fff"></div>
<svg class="a" style="left:1154px;top:731px" width="15" height="15" viewBox="0 0 15 15"><path d="M14 2L2 14M14 6L6 14M14 10L10 14" stroke="#a0a0a0" stroke-width="1.200"/><path d="M15 2L3 14M15 6L7 14M15 10L11 14" stroke="#fff" stroke-width="1"/></svg>
</div>
</body></html>
